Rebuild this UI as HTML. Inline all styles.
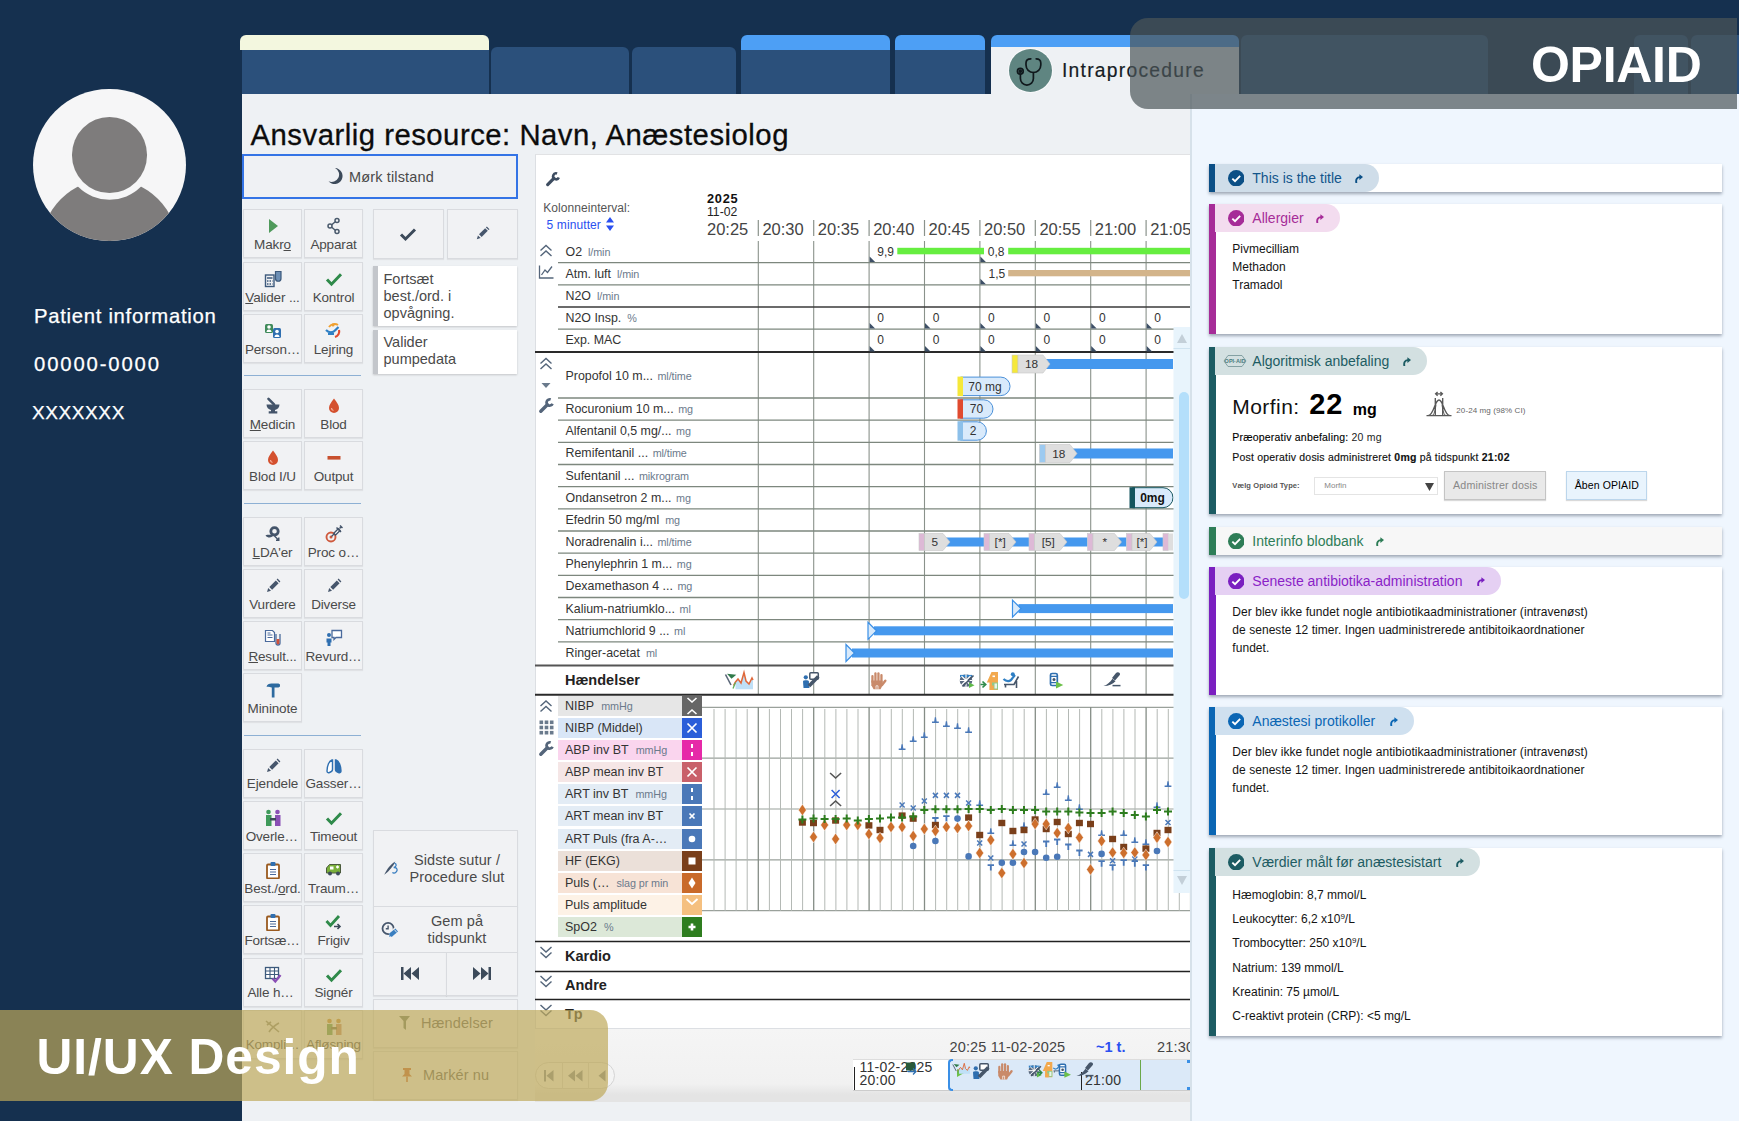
<!DOCTYPE html>
<html lang="da"><head><meta charset="utf-8"><title>OPIAID</title><style>
*{box-sizing:border-box}
html,body{margin:0;padding:0}
body{width:1739px;height:1121px;position:relative;overflow:hidden;background:#15304f;font-family:"Liberation Sans",sans-serif;color:#333}
.abs{position:absolute}
.tab{position:absolute;background:#2b507b;border-radius:6px 6px 0 0}
.tabtop{position:absolute;border-radius:6px 6px 0 0}
.sb{position:absolute;width:59px;height:49px;border:1px solid #d9dbdf;background:#f1f2f4;box-shadow:0 1px 1px rgba(0,0,0,.06);text-align:center;font-size:13.5px;color:#4a4a4a;white-space:nowrap;overflow:hidden}
.sb svg{position:absolute;left:50%;top:7px;margin-left:-9px;width:18px;height:18px}
.sb span{position:absolute;left:-6px;right:-6px;top:26.600px;line-height:16px;letter-spacing:-.15px}
.sep{position:absolute;left:244px;width:117px;height:1px;background:#8db0d4}
.wb{position:absolute;border:1px solid #d9dbdf;background:#f1f2f4;box-shadow:0 1px 1px rgba(0,0,0,.06)}
.card{position:absolute;left:1209.200px;width:513.100px;background:#fff;box-shadow:0 2px 3px rgba(60,70,90,.45)}
.bar{position:absolute;left:0;top:0;bottom:0;width:6.800px}
.in{position:absolute;left:-.9px;top:0;right:0;bottom:0}
.pill{position:absolute;left:7px;top:0;height:28px;border-radius:0 14px 14px 0;font-size:14px;line-height:28px;padding-left:37px;white-space:nowrap}
.pill svg.ck{position:absolute;left:12.500px;top:5.800px;width:16.500px;height:16.500px}
.pill svg.ar{position:absolute;right:16px;top:9.500px;width:8px;height:9px}
.ct{position:absolute;left:24px;font-size:12px;color:#141414;line-height:18.2px;white-space:nowrap}
.rl{position:absolute;left:565.500px;font-size:12.400px;color:#333;white-space:nowrap;line-height:14px}
.rl i{font-style:normal;font-size:10.800px;color:#6b7a8c;margin-left:6px;letter-spacing:-.1px}
.vl{position:absolute;left:558px;width:124px;height:20px;font-size:12.500px;line-height:20px;padding-left:7px;color:#333;white-space:nowrap}
.vl i{font-style:normal;font-size:10.800px;letter-spacing:-.1px;color:#6b7a8c;margin-left:4px}
.vs{position:absolute;left:682px;width:20px;height:20px}
</style></head><body>
<div class="abs" style="left:33.300px;top:88.800px;width:152.300px;height:152.300px;border-radius:50%;background:#f6f6f7;overflow:hidden">
<div class="abs" style="left:8.100px;top:90.700px;width:136.200px;height:136.200px;border-radius:50%;background:#7e7c7c"></div>
<div class="abs" style="left:38.300px;top:28.600px;width:75.800px;height:75.800px;border-radius:50%;background:#7e7c7c;box-shadow:0 0 0 6.800px #f6f6f7"></div>
</div>
<div class="abs" style="left:34px;top:303.700px;font-size:20.300px;color:#fff;-webkit-text-stroke:.25px #fff;line-height:24px;letter-spacing:.7px;white-space:nowrap">Patient information</div>
<div class="abs" style="left:34px;top:351.700px;font-size:20.300px;color:#fff;-webkit-text-stroke:.25px #fff;line-height:24px;letter-spacing:1.85px;white-space:nowrap">00000-0000</div>
<div class="abs" style="left:32px;top:400.700px;font-size:19px;color:#fff;-webkit-text-stroke:.25px #fff;line-height:24px;letter-spacing:.6px;white-space:nowrap">XXXXXXX</div>
<div class="tabtop" style="left:239.6px;top:35.4px;width:249px;height:15px;background:#f3f7df"></div>
<div class="abs" style="left:241.6px;top:50.4px;width:247px;height:44px;background:#2b507b"></div>
<div class="tab" style="left:490.6px;top:47.4px;width:138px;height:47px"></div>
<div class="tab" style="left:631.6px;top:47.4px;width:104px;height:47px"></div>
<div class="tabtop" style="left:740.6px;top:35.4px;width:149px;height:20px;background:#4d9ff5"></div>
<div class="abs" style="left:740.6px;top:50.4px;width:149px;height:44px;background:#2b507b"></div>
<div class="tabtop" style="left:894.6px;top:35.4px;width:90px;height:20px;background:#4d9ff5"></div>
<div class="abs" style="left:894.6px;top:50.4px;width:90px;height:44px;background:#2b507b"></div>
<div class="tabtop" style="left:990.6px;top:35.4px;width:248px;height:20px;background:#4d9ff5"></div>
<div class="abs" style="left:990.6px;top:47.4px;width:248px;height:47px;background:#eef1f4"></div>
<div class="tab" style="left:1240.6px;top:35.4px;width:247px;height:59px"></div>
<div class="tab" style="left:1633.6px;top:35.4px;width:54px;height:59px"></div>
<div class="tab" style="left:1690.6px;top:35.4px;width:60px;height:59px"></div>
<div class="abs" style="left:241.5px;top:94.2px;width:950px;height:1027px;background:#eef1f4"></div>
<div class="abs" style="left:1190px;top:94px;width:549px;height:1027px;background:#eff6fe;border-left:2px solid #d6e1ea"></div>
<div class="abs" style="left:1008.800px;top:49.300px;width:43px;height:43px;border-radius:50%;background:#5f8581;box-shadow:0 0 0 1px rgba(255,255,255,.6)"></div>
<svg class="abs" style="left:1008.800px;top:49.300px" width="43" height="43" viewBox="0 0 43 43" fill="none" stroke="#10181c" stroke-width="1.700" stroke-linecap="round"><path d="M21.800 9.800C19 9.800 17 11 17 14V16.100A7.400 7.400 0 0 0 31.800 16.100V14C31.800 11 30 9.800 27.200 9.800"/><path d="M24.400 23.500V29.600A6.500 6.500 0 0 1 11.400 29.600V25.400"/><circle cx="11.300" cy="22.200" r="2.900"/><circle cx="11.300" cy="22.200" r="1" fill="#10181c"/></svg>
<div class="abs" style="left:1062px;top:58px;font-size:19.300px;line-height:26px;color:#151c24;letter-spacing:1.25px;white-space:nowrap;-webkit-text-stroke:.2px #151c24">Intraprocedure</div>
<div class="abs" style="left:250.500px;top:116.500px;font-size:29.300px;line-height:36px;color:#0c0c0c;white-space:nowrap;letter-spacing:.5px;-webkit-text-stroke:.3px #0c0c0c">Ansvarlig resource: Navn, Anæstesiolog</div>
<div class="sb" style="left:243px;top:209.0px"><svg viewBox="0 0 18 18"><path d="M5 2l9 7-9 7z" fill="#4f9a5b"/></svg><span style="margin-left:0.0px">Makr<u>o</u></span></div>
<div class="sb" style="left:304px;top:209.0px"><svg viewBox="0 0 18 18"><g fill="none" stroke="#4a5a6c" stroke-width="1.5"><circle cx="12" cy="3.5" r="2"/><circle cx="5" cy="9" r="2"/><circle cx="12" cy="14.5" r="2"/><path d="M10.3 4.7L6.7 7.8M6.7 10.2l3.6 3.1"/></g></svg><span style="margin-left:0.0px">Apparat</span></div>
<div class="sb" style="left:243px;top:262.0px"><svg viewBox="0 0 18 18"><g fill="none" stroke="#3d5a7c" stroke-width="1.4"><rect x="1.5" y="5" width="8.5" height="11.5"/><path d="M3 8h5.5M3 11h1.5M5.5 11h1.5M8 11h.5M3 14h1.5M5.5 14h1.5M8 14h.5"/></g><path d="M11.5 1.5h5.5v7a2.7 2.7 0 0 1-5.5 0z" fill="#6d8fb5" stroke="#3d5a7c" stroke-width="1.2"/></svg><span style="margin-left:0.0px"><u>V</u>alider ...</span></div>
<div class="sb" style="left:304px;top:262.0px"><svg viewBox="0 0 18 18"><path d="M2 9.5l4.5 4.7L16 4.2" fill="none" stroke="#2f8a4a" stroke-width="3"/></svg><span style="margin-left:0.0px">Kontrol</span></div>
<div class="sb" style="left:243px;top:314.0px"><svg viewBox="0 0 18 18"><rect x="1" y="2" width="8" height="9" rx="1.5" fill="#3f8a5a"/><rect x="9" y="6" width="8" height="10" rx="1.5" fill="#2f6fb0"/><circle cx="5" cy="5" r="1.8" fill="#fff"/><path d="M2.5 10a2.5 2.5 0 0 1 5 0z" fill="#fff"/><circle cx="13" cy="9.5" r="1.8" fill="#fff"/><path d="M10.5 15a2.5 2.5 0 0 1 5 0z" fill="#fff"/></svg><span style="margin-left:0.0px">Person…</span></div>
<div class="sb" style="left:304px;top:314.0px"><svg viewBox="0 0 18 18"><path d="M1 8c3 3 7 3 9.500 0l3-3" fill="none" stroke="#2f7fc4" stroke-width="2.2"/><path d="M4 5c2-3 6-4 9-2" fill="none" stroke="#f0a030" stroke-width="2"/><circle cx="8" cy="3" r="1.6" fill="#f0a030"/><path d="M14 8c1 3-1 6-4 7" fill="none" stroke="#e04a2f" stroke-width="2.2"/><path d="M3 12h6" stroke="#2f7fc4" stroke-width="2"/></svg><span style="margin-left:0.0px">Lejring</span></div>
<div class="sb" style="left:243px;top:389.0px"><svg viewBox="0 0 18 18"><path d="M2.500 7.500h13c0 3-2 5-4.500 5.500v1.200h2.300v2.300h-8.600v-2.300H7V13c-2.500-.5-4.500-2.500-4.500-5.500z" fill="#44546a"/><path d="M4.500 1.800l5.500 5.500" stroke="#44546a" stroke-width="2.600" stroke-linecap="round"/></svg><span style="margin-left:0.0px"><u>M</u>edicin</span></div>
<div class="sb" style="left:304px;top:389.0px"><svg viewBox="0 0 18 18"><path d="M9 1.500c3 4 5 6.500 5 9.500a5 5 0 0 1-10 0c0-3 2-5.500 5-9.500z" fill="#d4502e"/><path d="M6.500 11a2.500 2.500 0 0 0 2 2.500" stroke="#f6b09a" stroke-width="1.2" fill="none"/></svg><span style="margin-left:0.0px">Blod</span></div>
<div class="sb" style="left:243px;top:441.0px"><svg viewBox="0 0 18 18"><path d="M9 1.500c3 4 5 6.500 5 9.500a5 5 0 0 1-10 0c0-3 2-5.500 5-9.500z" fill="#d4502e"/><path d="M6.500 11a2.500 2.500 0 0 0 2 2.500" stroke="#f6b09a" stroke-width="1.2" fill="none"/></svg><span style="margin-left:0.0px">Blod I/U</span></div>
<div class="sb" style="left:304px;top:441.0px"><svg viewBox="0 0 18 18"><rect x="2.500" y="7" width="13" height="3.600" fill="#c8502e"/></svg><span style="margin-left:0.0px">Output</span></div>
<div class="sb" style="left:243px;top:517.0px"><svg viewBox="0 0 18 18"><circle cx="10.500" cy="6.300" r="3.700" fill="none" stroke="#44546a" stroke-width="2.800"/><path d="M1.500 10.500c2.500-1.500 5 0 7-1.500l1.500 1c-2 3-6 3.500-8.500.5z" fill="#44546a"/><path d="M10.500 11l4 4M14.800 12.500v2.800h-2.800" fill="none" stroke="#44546a" stroke-width="1.400"/></svg><span style="margin-left:0.0px"><u>L</u>DA'er</span></div>
<div class="sb" style="left:304px;top:517.0px"><svg viewBox="0 0 18 18"><circle cx="6" cy="12" r="4.500" fill="none" stroke="#cf5a3e" stroke-width="1.900"/><circle cx="6" cy="12" r="1.500" fill="#cf5a3e"/><path d="M6.500 11.500l3-3" stroke="#44546a" stroke-width="1.300"/><path d="M8.800 8.200l4.500-4.500 1.800 1.800-4.500 4.500z" fill="#fff" stroke="#44546a" stroke-width="1.300"/><path d="M11.500 2.500l4.500 4.500M14.500 3.500l2-2M15 .5l2.500 2.500" stroke="#44546a" stroke-width="1.500" fill="none"/></svg><span style="margin-left:0.0px">Proc o…</span></div>
<div class="sb" style="left:243px;top:569.0px"><svg viewBox="0 0 18 18"><path d="M3 15l1.200-4 2.800 2.800z" fill="#46566c"/><path d="M5.300 9.900l6.500-6.500 2.800 2.800-6.500 6.500z" fill="#46566c"/><path d="M12.600 2.600l1-1 2.800 2.800-1 1z" fill="#46566c"/></svg><span style="margin-left:0.0px">Vurdere</span></div>
<div class="sb" style="left:304px;top:569.0px"><svg viewBox="0 0 18 18"><path d="M3 15l1.200-4 2.800 2.800z" fill="#46566c"/><path d="M5.300 9.900l6.500-6.500 2.800 2.800-6.500 6.500z" fill="#46566c"/><path d="M12.600 2.600l1-1 2.800 2.800-1 1z" fill="#46566c"/></svg><span style="margin-left:0.0px">Diverse</span></div>
<div class="sb" style="left:243px;top:621.0px"><svg viewBox="0 0 18 18"><path d="M1.500 1.500h7l2 2v9h-9z" fill="#fff" stroke="#4a6a9c" stroke-width="1.200"/><path d="M3.500 6h5M3.500 8.500h5M3.500 4h3" stroke="#4a6a9c" stroke-width="1"/><path d="M12 5v9a2 2 0 0 0 4 0V5" fill="none" stroke="#4a6a9c" stroke-width="1.300"/><path d="M12.600 10h2.800v4a1.400 1.400 0 0 1-2.800 0z" fill="#d0503a"/></svg><span style="margin-left:0.0px"><u>R</u>esult...</span></div>
<div class="sb" style="left:304px;top:621.0px"><svg viewBox="0 0 18 18"><path d="M7 1.500h9.500v7H11l-2 2V8.500H7z" fill="#fff" stroke="#4a6a9c" stroke-width="1.300"/><circle cx="4" cy="6" r="2" fill="#2f6fb0"/><path d="M1.500 9.500h5v4h-1v3.500h-3V13.500h-1z" fill="#2f6fb0"/></svg><span style="margin-left:0.0px">Revurd…</span></div>
<div class="sb" style="left:243px;top:673.0px"><svg viewBox="0 0 18 18"><path d="M2.500 5.800c.5-2.300 2.500-3.300 5-3.300h7l1.500 1v2l-1.500 1h-7c-2-1-3.500-.8-5-.7z" fill="#2d6a9f"/><rect x="7.800" y="5.500" width="2.700" height="11" fill="#2d6a9f"/></svg><span style="margin-left:0.0px">Mininote</span></div>
<div class="sb" style="left:243px;top:748.5px"><svg viewBox="0 0 18 18"><path d="M3 15l1.200-4 2.800 2.800z" fill="#46566c"/><path d="M5.300 9.900l6.500-6.500 2.800 2.800-6.500 6.500z" fill="#46566c"/><path d="M12.600 2.600l1-1 2.800 2.800-1 1z" fill="#46566c"/></svg><span style="margin-left:0.0px">Ejendele</span></div>
<div class="sb" style="left:304px;top:748.5px"><svg viewBox="0 0 18 18"><path d="M7 3c-3 1-5 6-5 11 0 1.500 1 2 2.500 1.500s3-1.500 3-3V3z" fill="#fff" stroke="#2f6fb0" stroke-width="1.400"/><path d="M11 3c3 1 5 6 5 11 0 1.500-1 2-2.500 1.500s-3-1.500-3-3V3z" fill="#2f6fb0" stroke="#2f6fb0" stroke-width="1.400"/></svg><span style="margin-left:0.0px">Gasser…</span></div>
<div class="sb" style="left:243px;top:801.0px"><svg viewBox="0 0 18 18"><circle cx="4.500" cy="3" r="2.300" fill="#3f9a5a"/><rect x="2" y="6" width="5.500" height="11" fill="#3f9a5a"/><circle cx="13.500" cy="3" r="2.300" fill="#8a4fb5"/><rect x="11" y="6" width="5.500" height="11" fill="#8a4fb5"/><rect x="6" y="9" width="6" height="2.500" fill="#3c4a5a"/></svg><span style="margin-left:-1.5px">Overle…</span></div>
<div class="sb" style="left:304px;top:801.0px"><svg viewBox="0 0 18 18"><path d="M2 9.5l4.5 4.7L16 4.2" fill="none" stroke="#2f8a4a" stroke-width="3"/></svg><span style="margin-left:0.0px">Timeout</span></div>
<div class="sb" style="left:243px;top:853.0px"><svg viewBox="0 0 18 18"><rect x="3" y="3.500" width="12" height="14" rx="1" fill="#fff" stroke="#9a5a1f" stroke-width="1.800"/><rect x="6.500" y="1" width="5" height="4" rx="1" fill="#2f6fb0"/><path d="M6 8.500h6M6 11h6M6 13.500h6" stroke="#4a6a9c" stroke-width="1.100"/></svg><span style="margin-left:0.0px">Best./<u>o</u>rd.</span></div>
<div class="sb" style="left:304px;top:853.0px"><svg viewBox="0 0 18 18"><path d="M1.500 12V7l3-3.500h11V12z" fill="#7ab03a" stroke="#4a5a3c" stroke-width="1"/><rect x="5" y="5.500" width="3.500" height="3" fill="#fff"/><path d="M11 6h3M12.500 4.500v3" stroke="#fff" stroke-width="1.300"/><circle cx="5" cy="12.500" r="2" fill="#3c4a5a"/><circle cx="13" cy="12.500" r="2" fill="#3c4a5a"/></svg><span style="margin-left:0.0px">Traum…</span></div>
<div class="sb" style="left:243px;top:905.3px"><svg viewBox="0 0 18 18"><rect x="3" y="3.500" width="12" height="14" rx="1" fill="#fff" stroke="#9a5a1f" stroke-width="1.800"/><rect x="6.500" y="1" width="5" height="4" rx="1" fill="#2f6fb0"/><path d="M6 8.500h6M6 11h6M6 13.500h6" stroke="#4a6a9c" stroke-width="1.100"/></svg><span style="margin-left:-1.0px">Fortsæ…</span></div>
<div class="sb" style="left:304px;top:905.3px"><svg viewBox="0 0 18 18"><path d="M1.500 8l4 4.500L14 3" fill="none" stroke="#2f8a4a" stroke-width="2.800"/><path d="M9 13.500h6m-2.500-2.500l2.500 2.500-2.500 2.500" fill="none" stroke="#3c4a5a" stroke-width="1.600"/></svg><span style="margin-left:0.0px">Frigiv</span></div>
<div class="sb" style="left:243px;top:957.6px"><svg viewBox="0 0 18 18"><rect x="1.500" y="1.500" width="13" height="11" fill="#fff" stroke="#3d5a7c" stroke-width="1.300"/><path d="M1.500 5h13M1.500 8.500h13M6 1.500v11M10.500 1.500v11" stroke="#3d5a7c" stroke-width="1.100"/><path d="M8.500 12.500l2.800 3L16.500 9" fill="none" stroke="#8a4fb5" stroke-width="2.400"/></svg><span style="margin-left:-4.0px">Alle h…</span></div>
<div class="sb" style="left:304px;top:957.6px"><svg viewBox="0 0 18 18"><path d="M2 9.5l4.5 4.7L16 4.2" fill="none" stroke="#2f8a4a" stroke-width="3"/></svg><span style="margin-left:0.0px">Signér</span></div>
<div class="sb" style="left:243px;top:1009.6px"><svg viewBox="0 0 18 18"><path d="M2 3l13 11M5 14c2-3 6-7 10-9M3 7l4-3" fill="none" stroke="#8a8a7a" stroke-width="1.600"/></svg><span style="margin-left:0.0px">Kompli…</span></div>
<div class="sb" style="left:304px;top:1009.6px"><svg viewBox="0 0 18 18"><circle cx="4.500" cy="3" r="2.300" fill="#c48a3a"/><rect x="2" y="6" width="5.500" height="11" fill="#5f9a5a"/><circle cx="13.500" cy="3" r="2.300" fill="#c48a3a"/><rect x="11" y="6" width="5.500" height="11" fill="#c48a6a"/><rect x="6" y="9" width="6" height="2.500" fill="#6a6a4a"/></svg><span style="margin-left:0.0px">Afløsning</span></div>
<div class="sep" style="top:375px"></div>
<div class="sep" style="top:503px"></div>
<div class="sep" style="top:735px"></div>
<div class="abs" style="left:242px;top:154px;width:276px;height:45px;border:2px solid #3474e6;background:#eff1f4"></div>
<svg class="abs" style="left:327px;top:167px" width="18" height="18" viewBox="0 0 18 18"><path d="M8 1a8 8 0 1 1-6.500 13.200A6.800 6.800 0 0 0 8 1z" fill="#3c4a5a"/></svg>
<div class="abs" style="left:349px;top:168px;font-size:14.500px;line-height:18px;color:#4a4a4a;white-space:nowrap;letter-spacing:.15px">Mørk tilstand</div>
<div class="wb" style="left:373px;top:209px;width:71px;height:50px"></div>
<svg class="abs" style="left:399px;top:225px" width="18" height="18" viewBox="0 0 18 18"><path d="M2 9.500l4.500 4.500L16 4.500" fill="none" stroke="#3c4a5a" stroke-width="3"/></svg>
<div class="wb" style="left:447px;top:209px;width:71px;height:50px"></div>
<svg class="abs" style="left:474px;top:225px" width="17" height="17" viewBox="0 0 18 18"><path d="M3 15l1.200-4 2.800 2.800z" fill="#46566c"/><path d="M5.300 9.900l6.500-6.500 2.800 2.800-6.500 6.500z" fill="#46566c"/><path d="M12.600 2.600l1-1 2.800 2.800-1 1z" fill="#46566c"/></svg>
<div class="abs" style="left:373px;top:266px;width:144px;height:60px;background:#fff;border-left:5px solid #c3c6cb;box-shadow:0 1px 2px rgba(0,0,0,.18)"></div>
<div class="abs" style="left:383.500px;top:271px;font-size:14.500px;line-height:17px;color:#4a4a4a">Fortsæt<br>best./ord. i<br>opvågning.</div>
<div class="abs" style="left:373px;top:330px;width:144px;height:44px;background:#fff;border-left:5px solid #c3c6cb;box-shadow:0 1px 2px rgba(0,0,0,.18)"></div>
<div class="abs" style="left:383.500px;top:334px;font-size:14.500px;line-height:17px;color:#4a4a4a">Valider<br>pumpedata</div>
<div class="wb" style="left:373px;top:830px;width:145px;height:77px"></div>
<svg class="abs" style="left:382px;top:858px" width="18" height="20" viewBox="0 0 18 20"><path d="M2.300 16.800C5 11 9 6 13.300 3.600 11.500 8 7.500 13 2.300 16.800z" fill="#46566c"/><path d="M12.300 5.200c2.600.6 2.600 3.600-.6 4.300 3.600-.3 4.600 3 2 5-1.200.9-2.600.7-3.200-.2" fill="none" stroke="#3a7fc0" stroke-width="1.300"/></svg>
<div class="abs" style="left:400px;top:851.800px;width:114px;text-align:center;font-size:14.500px;line-height:17px;color:#4a4a4a;letter-spacing:.1px">Sidste sutur /<br>Procedure slut</div>
<div class="wb" style="left:373px;top:906px;width:145px;height:47px"></div>
<svg class="abs" style="left:381px;top:920px" width="18" height="18" viewBox="0 0 18 18"><circle cx="7.100" cy="8.500" r="5.600" fill="none" stroke="#46566c" stroke-width="1.800"/><path d="M7.100 5.500v3.300H4.800" fill="none" stroke="#46566c" stroke-width="1.400"/><path d="M9.300 15.300l6.400-5.300" stroke="#f1f2f4" stroke-width="6.500"/><path d="M9.300 15.300l6.400-5.300" stroke="#3a7fc0" stroke-width="4.200"/><path d="M13.300 9.500l2.500 3" stroke="#f1f2f4" stroke-width=".9"/><path d="M8 16.800l1-2.800 1.800 2.100z" fill="#3a7fc0"/></svg>
<div class="abs" style="left:400px;top:912.800px;width:114px;text-align:center;font-size:14.500px;line-height:17px;color:#4a4a4a;letter-spacing:.1px">Gem på<br>tidspunkt</div>
<div class="wb" style="left:373px;top:952px;width:74px;height:44px"></div>
<div class="wb" style="left:446px;top:952px;width:72px;height:44px"></div>
<svg class="abs" style="left:401px;top:966px" width="18" height="15" viewBox="0 0 18 15"><rect x="0" y="1" width="2.500" height="13" fill="#3c4a5a"/><path d="M10 1v13L2.500 7.500zM18 1v13l-7.500-6.500z" fill="#3c4a5a"/></svg>
<svg class="abs" style="left:473px;top:966px" width="18" height="15" viewBox="0 0 18 15"><rect x="15.500" y="1" width="2.500" height="13" fill="#3c4a5a"/><path d="M8 1v13l7.500-6.500zM0 1v13l7.500-6.500z" fill="#3c4a5a"/></svg>
<div class="wb" style="left:373px;top:999px;width:145px;height:49px"></div>
<svg class="abs" style="left:398px;top:1015px" width="16" height="16" viewBox="0 0 16 16"><path d="M1 1h11L8 6v9L5.500 13V6z" fill="#6a7a6a"/></svg>
<div class="abs" style="left:421px;top:1014px;font-size:14.500px;line-height:18px;color:#5a5a5a;letter-spacing:.1px">Hændelser</div>
<div class="wb" style="left:373px;top:1051px;width:145px;height:49px"></div>
<svg class="abs" style="left:400px;top:1067px" width="14" height="16" viewBox="0 0 14 16"><path d="M3 1h8v2H9.500v4L12 9.500H2L4.500 7V3H3z" fill="#c8602e"/><path d="M7 9.500V15" stroke="#c8602e" stroke-width="1.600"/></svg>
<div class="abs" style="left:423px;top:1066px;font-size:14.500px;line-height:18px;color:#5a5a5a;letter-spacing:.1px">Markér nu</div>
<div class="abs" style="left:535px;top:154px;width:655px;height:875px;background:#fff;border:1px solid #dcdfe3;border-top:1.500px solid #e1e2e4;border-right:none"></div>
<div class="abs" style="left:535px;top:1029px;width:655px;height:72.500px;background:linear-gradient(#f5f5f5,#f1f1f1 75%,#e4e4e4 90%)"></div>
<svg class="abs" style="left:535px;top:154px" width="655" height="877" viewBox="535 154 655 877" font-family="Liberation Sans,sans-serif"><path d="M758.3 241V694" stroke="#8a928b" stroke-width="1.100"/><path d="M758.3 220V236" stroke="#8a928b" stroke-width="1.200"/><path d="M813.7 241V694" stroke="#8a928b" stroke-width="1.100"/><path d="M813.7 220V236" stroke="#8a928b" stroke-width="1.200"/><path d="M869.1 241V694" stroke="#8a928b" stroke-width="1.100"/><path d="M869.1 220V236" stroke="#8a928b" stroke-width="1.200"/><path d="M924.5 241V694" stroke="#8a928b" stroke-width="1.100"/><path d="M924.5 220V236" stroke="#8a928b" stroke-width="1.200"/><path d="M979.9 241V694" stroke="#8a928b" stroke-width="1.100"/><path d="M979.9 220V236" stroke="#8a928b" stroke-width="1.200"/><path d="M1035.3 241V694" stroke="#8a928b" stroke-width="1.100"/><path d="M1035.3 220V236" stroke="#8a928b" stroke-width="1.200"/><path d="M1090.7 241V694" stroke="#8a928b" stroke-width="1.100"/><path d="M1090.7 220V236" stroke="#8a928b" stroke-width="1.200"/><path d="M1146.1 241V694" stroke="#8a928b" stroke-width="1.100"/><path d="M1146.1 220V236" stroke="#8a928b" stroke-width="1.200"/><path d="M558 262.7H1191" stroke="#7d877e" stroke-width="1.300"/><path d="M558 284.8H1191" stroke="#7d877e" stroke-width="1.300"/><path d="M558 329.2H1191" stroke="#7d877e" stroke-width="1.300"/><path d="M558 398.0H1191" stroke="#7d877e" stroke-width="1.300"/><path d="M558 420.2H1191" stroke="#7d877e" stroke-width="1.300"/><path d="M558 442.3H1191" stroke="#7d877e" stroke-width="1.300"/><path d="M558 464.5H1191" stroke="#7d877e" stroke-width="1.300"/><path d="M558 486.7H1191" stroke="#7d877e" stroke-width="1.300"/><path d="M558 508.9H1191" stroke="#7d877e" stroke-width="1.300"/><path d="M558 531.0H1191" stroke="#7d877e" stroke-width="1.300"/><path d="M558 553.2H1191" stroke="#7d877e" stroke-width="1.300"/><path d="M558 575.4H1191" stroke="#7d877e" stroke-width="1.300"/><path d="M558 597.5H1191" stroke="#7d877e" stroke-width="1.300"/><path d="M558 619.7H1191" stroke="#7d877e" stroke-width="1.300"/><path d="M558 641.9H1191" stroke="#7d877e" stroke-width="1.300"/><path d="M558 307H1191" stroke="#3a3a3a" stroke-width="1.400"/><path d="M535 352.0H1191" stroke="#2a2a2a" stroke-width="2.0"/><path d="M535 665.5H1191" stroke="#555" stroke-width="1.8"/><path d="M535 694.7H1191" stroke="#2a2a2a" stroke-width="2.0"/><path d="M535 941.5H1191" stroke="#222" stroke-width="1.7"/><path d="M535 971.5H1191" stroke="#222" stroke-width="1.7"/><path d="M535 999.5H1191" stroke="#222" stroke-width="1.7"/><text x="707.0" y="234.500" font-size="16.500" fill="#444">20:25</text><text x="762.4" y="234.500" font-size="16.500" fill="#444">20:30</text><text x="817.8" y="234.500" font-size="16.500" fill="#444">20:35</text><text x="873.2" y="234.500" font-size="16.500" fill="#444">20:40</text><text x="928.6" y="234.500" font-size="16.500" fill="#444">20:45</text><text x="984.0" y="234.500" font-size="16.500" fill="#444">20:50</text><text x="1039.4" y="234.500" font-size="16.500" fill="#444">20:55</text><text x="1094.8" y="234.500" font-size="16.500" fill="#444">21:00</text><text x="1150.2" y="234.500" font-size="16.500" fill="#444">21:05</text><text x="707" y="202.600" font-size="12.800" font-weight="bold" fill="#111" letter-spacing=".7">2025</text><text x="707" y="215.800" font-size="12.200" fill="#222">11-02</text><path d="M869.6 262.1v-5.500l5.500 5.500z" fill="#3d4f66"/><text x="877.3" y="255.6" font-size="12" fill="#333">9,9</text><rect x="897.300" y="247.800" width="86.700" height="6.500" fill="#66ee40"/><path d="M980.4 262.1v-5.500l5.500 5.500z" fill="#3d4f66"/><text x="987.8" y="255.6" font-size="12" fill="#333">0,8</text><rect x="1008.200" y="247.800" width="183" height="6.500" fill="#66ee40"/><path d="M980.4 284.2v-5.500l5.500 5.500z" fill="#3d4f66"/><text x="988.5" y="277.8" font-size="12" fill="#333">1,5</text><rect x="1008.200" y="270" width="183" height="6.300" fill="#d3b48a"/><path d="M869.6 328.6v-5.500l5.500 5.500z" fill="#3d4f66"/><text x="877.3" y="321.5" font-size="12" fill="#333">0</text><path d="M869.6 351.4v-5.500l5.500 5.500z" fill="#3d4f66"/><text x="877.3" y="343.7" font-size="12" fill="#333">0</text><path d="M925.0 328.6v-5.500l5.500 5.500z" fill="#3d4f66"/><text x="932.7" y="321.5" font-size="12" fill="#333">0</text><path d="M925.0 351.4v-5.500l5.500 5.500z" fill="#3d4f66"/><text x="932.7" y="343.7" font-size="12" fill="#333">0</text><path d="M980.4 328.6v-5.500l5.500 5.500z" fill="#3d4f66"/><text x="988.1" y="321.5" font-size="12" fill="#333">0</text><path d="M980.4 351.4v-5.500l5.500 5.500z" fill="#3d4f66"/><text x="988.1" y="343.7" font-size="12" fill="#333">0</text><path d="M1035.8 328.6v-5.500l5.500 5.500z" fill="#3d4f66"/><text x="1043.5" y="321.5" font-size="12" fill="#333">0</text><path d="M1035.8 351.4v-5.500l5.500 5.500z" fill="#3d4f66"/><text x="1043.5" y="343.7" font-size="12" fill="#333">0</text><path d="M1091.2 328.6v-5.500l5.500 5.500z" fill="#3d4f66"/><text x="1098.9" y="321.5" font-size="12" fill="#333">0</text><path d="M1091.2 351.4v-5.500l5.500 5.500z" fill="#3d4f66"/><text x="1098.9" y="343.7" font-size="12" fill="#333">0</text><path d="M1146.6 328.6v-5.500l5.500 5.500z" fill="#3d4f66"/><text x="1154.3" y="321.5" font-size="12" fill="#333">0</text><path d="M1146.6 351.4v-5.500l5.500 5.500z" fill="#3d4f66"/><text x="1154.3" y="343.7" font-size="12" fill="#333">0</text><rect x="1046.0" y="359.0" width="127.0" height="10.0" fill="#4598ee"/><rect x="1012.0" y="355.0" width="6.0" height="18.0" fill="#f5e83a" stroke="#c9c9c9" stroke-width=".6"/><path d="M1018.0 355.0H1043.0L1050.0 364.0L1043.0 373.0H1018.0z" fill="#dedede" stroke="#c6c6c6" stroke-width=".6"/><text x="1031.5" y="368.2" font-size="11.800" fill="#333" text-anchor="middle">18</text><path d="M960.5 377.1H1000.8A9.2 9.2 0 0 1 1000.8 395.6H960.5z" fill="#d9eafb" stroke="#4a90d9" stroke-width="1"/><rect x="957.5" y="376.6" width="5.500" height="19.5" fill="#f5e83a"/><text x="985.0" y="390.5" font-size="12" fill="#333" text-anchor="middle">70 mg</text><path d="M960.5 399.8H983.8A9.2 9.2 0 0 1 983.8 418.2H960.5z" fill="#d9eafb" stroke="#4a90d9" stroke-width="1"/><rect x="957.5" y="399.2" width="5.500" height="19.5" fill="#e04a2f"/><text x="976.5" y="413.2" font-size="12" fill="#333" text-anchor="middle">70</text><path d="M960.5 421.8H977.2A9.2 9.2 0 0 1 977.2 440.2H960.5z" fill="#d9eafb" stroke="#4a90d9" stroke-width="1"/><rect x="957.5" y="421.2" width="5.500" height="19.5" fill="#8cc0ea"/><text x="973.2" y="435.2" font-size="12" fill="#333" text-anchor="middle">2</text><rect x="1073.0" y="448.5" width="100.0" height="10.0" fill="#4598ee"/><rect x="1039.5" y="444.5" width="6.0" height="18.0" fill="#9ccaf0" stroke="#c9c9c9" stroke-width=".6"/><path d="M1045.5 444.5H1070.0L1077.0 453.5L1070.0 462.5H1045.5z" fill="#dedede" stroke="#c6c6c6" stroke-width=".6"/><text x="1058.8" y="457.7" font-size="11.800" fill="#333" text-anchor="middle">18</text><path d="M1132.5 487.7H1163.0A10.0 10.0 0 0 1 1163.0 507.7H1132.5z" fill="#d9eafb" stroke="#14555e" stroke-width="1"/><rect x="1129.5" y="487.2" width="5.500" height="21.0" fill="#14555e"/><text x="1152.5" y="501.9" font-size="12" fill="#111" text-anchor="middle" font-weight="bold">0mg</text><rect x="944.0" y="537.5" width="40.0" height="9.0" fill="#4598ee"/><rect x="1010.0" y="537.5" width="19.0" height="9.0" fill="#4598ee"/><rect x="1061.0" y="537.5" width="26.5" height="9.0" fill="#4598ee"/><rect x="1115.5" y="537.5" width="11.0" height="9.0" fill="#4598ee"/><rect x="1151.0" y="537.5" width="12.0" height="9.0" fill="#4598ee"/><rect x="919.0" y="533.5" width="5.5" height="17.0" fill="#ddb9d6" stroke="#c9c9c9" stroke-width=".6"/><path d="M924.5 533.5H943.0L950.0 542.0L943.0 550.5H924.5z" fill="#dedede" stroke="#c6c6c6" stroke-width=".6"/><text x="934.8" y="546.2" font-size="11.800" fill="#333" text-anchor="middle">5</text><rect x="984.0" y="533.5" width="5.5" height="17.0" fill="#ddb9d6" stroke="#c9c9c9" stroke-width=".6"/><path d="M989.5 533.5H1009.0L1016.0 542.0L1009.0 550.5H989.5z" fill="#dedede" stroke="#c6c6c6" stroke-width=".6"/><text x="1000.2" y="546.2" font-size="11.800" fill="#333" text-anchor="middle">[*]</text><rect x="1029.0" y="533.5" width="5.5" height="17.0" fill="#ddb9d6" stroke="#c9c9c9" stroke-width=".6"/><path d="M1034.5 533.5H1060.0L1067.0 542.0L1060.0 550.5H1034.5z" fill="#dedede" stroke="#c6c6c6" stroke-width=".6"/><text x="1048.2" y="546.2" font-size="11.800" fill="#333" text-anchor="middle">[5]</text><rect x="1087.5" y="533.5" width="5.5" height="17.0" fill="#ddb9d6" stroke="#c9c9c9" stroke-width=".6"/><path d="M1093.0 533.5H1114.5L1121.5 542.0L1114.5 550.5H1093.0z" fill="#dedede" stroke="#c6c6c6" stroke-width=".6"/><text x="1104.8" y="546.2" font-size="11.800" fill="#333" text-anchor="middle">*</text><rect x="1126.5" y="533.5" width="5.5" height="17.0" fill="#ddb9d6" stroke="#c9c9c9" stroke-width=".6"/><path d="M1132.0 533.5H1150.0L1157.0 542.0L1150.0 550.5H1132.0z" fill="#dedede" stroke="#c6c6c6" stroke-width=".6"/><text x="1142.0" y="546.2" font-size="11.800" fill="#333" text-anchor="middle">[*]</text><rect x="1163" y="533.500" width="5.500" height="17" fill="#ddb9d6" stroke="#c9c9c9" stroke-width=".6"/><rect x="1168.500" y="533.500" width="4.500" height="17" fill="#dedede"/><rect x="1018.5" y="604.1" width="154.5" height="9.0" fill="#4598ee"/><path d="M1012.5 600.1v17l8.500-8.500z" fill="#d9eafb" stroke="#3a8fe6" stroke-width="1.200"/><rect x="874.0" y="626.3" width="299.0" height="9.0" fill="#4598ee"/><path d="M868.0 622.3v17l8.500-8.500z" fill="#d9eafb" stroke="#3a8fe6" stroke-width="1.200"/><rect x="852.0" y="648.5" width="321.0" height="9.0" fill="#4598ee"/><path d="M846.0 644.5v17l8.500-8.500z" fill="#d9eafb" stroke="#3a8fe6" stroke-width="1.200"/><path d="M702 707.3H1190" stroke="#9aa19b" stroke-width="1.200"/><path d="M702 758.1H1190" stroke="#9aa19b" stroke-width="1.200"/><path d="M702 809.0H1190" stroke="#9aa19b" stroke-width="1.200"/><path d="M702 859.8H1190" stroke="#9aa19b" stroke-width="1.200"/><path d="M702 910.7H1190" stroke="#9aa19b" stroke-width="1.200"/><path d="M714.0 709V910.700" stroke="#b4b9b5" stroke-width="1"/><path d="M725.1 709V910.700" stroke="#b4b9b5" stroke-width="1"/><path d="M736.1 709V910.700" stroke="#b4b9b5" stroke-width="1"/><path d="M747.2 709V910.700" stroke="#b4b9b5" stroke-width="1"/><path d="M758.3 707V910.700" stroke="#858d86" stroke-width="1.300"/><path d="M769.4 709V910.700" stroke="#b4b9b5" stroke-width="1"/><path d="M780.5 709V910.700" stroke="#b4b9b5" stroke-width="1"/><path d="M791.5 709V910.700" stroke="#b4b9b5" stroke-width="1"/><path d="M802.6 709V910.700" stroke="#b4b9b5" stroke-width="1"/><path d="M813.7 707V910.700" stroke="#858d86" stroke-width="1.300"/><path d="M824.8 709V910.700" stroke="#b4b9b5" stroke-width="1"/><path d="M835.9 709V910.700" stroke="#b4b9b5" stroke-width="1"/><path d="M846.9 709V910.700" stroke="#b4b9b5" stroke-width="1"/><path d="M858.0 709V910.700" stroke="#b4b9b5" stroke-width="1"/><path d="M869.1 707V910.700" stroke="#858d86" stroke-width="1.300"/><path d="M880.2 709V910.700" stroke="#b4b9b5" stroke-width="1"/><path d="M891.3 709V910.700" stroke="#b4b9b5" stroke-width="1"/><path d="M902.3 709V910.700" stroke="#b4b9b5" stroke-width="1"/><path d="M913.4 709V910.700" stroke="#b4b9b5" stroke-width="1"/><path d="M924.5 707V910.700" stroke="#858d86" stroke-width="1.300"/><path d="M935.6 709V910.700" stroke="#b4b9b5" stroke-width="1"/><path d="M946.7 709V910.700" stroke="#b4b9b5" stroke-width="1"/><path d="M957.7 709V910.700" stroke="#b4b9b5" stroke-width="1"/><path d="M968.8 709V910.700" stroke="#b4b9b5" stroke-width="1"/><path d="M979.9 707V910.700" stroke="#858d86" stroke-width="1.300"/><path d="M991.0 709V910.700" stroke="#b4b9b5" stroke-width="1"/><path d="M1002.1 709V910.700" stroke="#b4b9b5" stroke-width="1"/><path d="M1013.1 709V910.700" stroke="#b4b9b5" stroke-width="1"/><path d="M1024.2 709V910.700" stroke="#b4b9b5" stroke-width="1"/><path d="M1035.3 707V910.700" stroke="#858d86" stroke-width="1.300"/><path d="M1046.4 709V910.700" stroke="#b4b9b5" stroke-width="1"/><path d="M1057.5 709V910.700" stroke="#b4b9b5" stroke-width="1"/><path d="M1068.5 709V910.700" stroke="#b4b9b5" stroke-width="1"/><path d="M1079.6 709V910.700" stroke="#b4b9b5" stroke-width="1"/><path d="M1090.7 707V910.700" stroke="#858d86" stroke-width="1.300"/><path d="M1101.8 709V910.700" stroke="#b4b9b5" stroke-width="1"/><path d="M1112.9 709V910.700" stroke="#b4b9b5" stroke-width="1"/><path d="M1123.9 709V910.700" stroke="#b4b9b5" stroke-width="1"/><path d="M1135.0 709V910.700" stroke="#b4b9b5" stroke-width="1"/><path d="M1146.1 707V910.700" stroke="#858d86" stroke-width="1.300"/><path d="M1157.2 709V910.700" stroke="#b4b9b5" stroke-width="1"/><path d="M1168.3 709V910.700" stroke="#b4b9b5" stroke-width="1"/><path d="M1179.3 709V910.700" stroke="#b4b9b5" stroke-width="1"/><path d="M1190.4 709V910.700" stroke="#b4b9b5" stroke-width="1"/><rect x="1173.500" y="327" width="17.500" height="566" fill="#e8f4fc"/><rect x="1179" y="392" width="10" height="207" rx="5" fill="#b4dffb"/><path d="M1173.500 348.500H1191M1173.500 870.500H1191" stroke="#cfe3f0" stroke-width="1"/><path d="M1177 343h10l-5-9z" fill="#c3cfd8"/><path d="M1177 876h10l-5 9z" fill="#c3cfd8"/><circle cx="913.2" cy="846.0" r="3.300" fill="#4a78b8"/><circle cx="935.4" cy="841.0" r="3.300" fill="#4a78b8"/><circle cx="957.5" cy="818.6" r="3.300" fill="#4a78b8"/><circle cx="968.6" cy="856.4" r="3.300" fill="#4a78b8"/><circle cx="1001.8" cy="862.7" r="3.300" fill="#4a78b8"/><circle cx="1012.9" cy="862.7" r="3.300" fill="#4a78b8"/><circle cx="1024.0" cy="852.0" r="3.300" fill="#4a78b8"/><circle cx="1035.1" cy="852.0" r="3.300" fill="#4a78b8"/><circle cx="1046.2" cy="857.8" r="3.300" fill="#4a78b8"/><circle cx="1057.2" cy="856.8" r="3.300" fill="#4a78b8"/><circle cx="1101.6" cy="853.9" r="3.300" fill="#4a78b8"/><circle cx="1157.0" cy="851.0" r="3.300" fill="#4a78b8"/><path d="M932.2 818.0h6.400M935.4 818.0v5.500" stroke="#4a78b8" stroke-width="1.800" fill="none"/><path d="M943.2 816.1h6.400M946.4 816.1v5.500" stroke="#4a78b8" stroke-width="1.800" fill="none"/><path d="M987.6 865.1h6.400M990.8 865.1v5.500" stroke="#4a78b8" stroke-width="1.800" fill="none"/><path d="M1043.0 841.5h6.400M1046.2 841.5v5.500" stroke="#4a78b8" stroke-width="1.800" fill="none"/><path d="M1054.0 839.5h6.400M1057.2 839.5v5.500" stroke="#4a78b8" stroke-width="1.800" fill="none"/><path d="M1065.1 844.5h6.400M1068.3 844.5v5.500" stroke="#4a78b8" stroke-width="1.800" fill="none"/><path d="M1076.2 850.5h6.400M1079.4 850.5v5.500" stroke="#4a78b8" stroke-width="1.800" fill="none"/><path d="M1098.4 861.2h6.400M1101.6 861.2v5.500" stroke="#4a78b8" stroke-width="1.800" fill="none"/><path d="M1109.4 865.1h6.400M1112.6 865.1v5.500" stroke="#4a78b8" stroke-width="1.800" fill="none"/><path d="M1120.5 860.2h6.400M1123.7 860.2v5.500" stroke="#4a78b8" stroke-width="1.800" fill="none"/><path d="M1131.6 861.2h6.400M1134.8 861.2v5.500" stroke="#4a78b8" stroke-width="1.800" fill="none"/><path d="M1142.7 865.1h6.400M1145.9 865.1v5.500" stroke="#4a78b8" stroke-width="1.800" fill="none"/><path d="M898.7 750.0h6.800v-1.600h-2.200l-.6-4.200h-1.200l-.6 4.200h-2.200z" fill="#4a78b8"/><path d="M909.8 742.0h6.800v-1.600h-2.200l-.6-4.200h-1.200l-.6 4.200h-2.200z" fill="#4a78b8"/><path d="M920.9 738.0h6.800v-1.600h-2.200l-.6-4.200h-1.200l-.6 4.200h-2.200z" fill="#4a78b8"/><path d="M932.0 723.0h6.800v-1.600h-2.200l-.6-4.200h-1.200l-.6 4.200h-2.200z" fill="#4a78b8"/><path d="M943.0 727.0h6.800v-1.600h-2.200l-.6-4.200h-1.200l-.6 4.200h-2.200z" fill="#4a78b8"/><path d="M954.1 729.0h6.800v-1.600h-2.200l-.6-4.200h-1.200l-.6 4.200h-2.200z" fill="#4a78b8"/><path d="M965.2 733.0h6.800v-1.600h-2.200l-.6-4.200h-1.200l-.6 4.200h-2.200z" fill="#4a78b8"/><path d="M976.3 806.0h6.800v-1.600h-2.200l-.6-4.200h-1.200l-.6 4.200h-2.200z" fill="#4a78b8"/><path d="M987.4 834.0h6.800v-1.600h-2.200l-.6-4.200h-1.200l-.6 4.200h-2.200z" fill="#4a78b8"/><path d="M1009.5 846.0h6.800v-1.600h-2.200l-.6-4.200h-1.200l-.6 4.200h-2.200z" fill="#4a78b8"/><path d="M1020.6 828.0h6.800v-1.600h-2.200l-.6-4.200h-1.200l-.6 4.200h-2.200z" fill="#4a78b8"/><path d="M1042.8 795.0h6.800v-1.600h-2.200l-.6-4.200h-1.200l-.6 4.200h-2.200z" fill="#4a78b8"/><path d="M1053.8 788.0h6.800v-1.600h-2.200l-.6-4.200h-1.200l-.6 4.200h-2.200z" fill="#4a78b8"/><path d="M1064.9 801.0h6.800v-1.600h-2.200l-.6-4.200h-1.200l-.6 4.200h-2.200z" fill="#4a78b8"/><path d="M1076.0 810.0h6.800v-1.600h-2.200l-.6-4.200h-1.200l-.6 4.200h-2.200z" fill="#4a78b8"/><path d="M1098.2 836.0h6.800v-1.600h-2.200l-.6-4.200h-1.200l-.6 4.200h-2.200z" fill="#4a78b8"/><path d="M1120.3 836.0h6.800v-1.600h-2.200l-.6-4.200h-1.200l-.6 4.200h-2.200z" fill="#4a78b8"/><path d="M1131.4 843.0h6.800v-1.600h-2.200l-.6-4.200h-1.200l-.6 4.200h-2.200z" fill="#4a78b8"/><path d="M1142.5 845.0h6.800v-1.600h-2.200l-.6-4.200h-1.200l-.6 4.200h-2.200z" fill="#4a78b8"/><path d="M1153.6 808.0h6.800v-1.600h-2.200l-.6-4.200h-1.200l-.6 4.200h-2.200z" fill="#4a78b8"/><path d="M1164.6 787.0h6.800v-1.600h-2.200l-.6-4.200h-1.200l-.6 4.200h-2.200z" fill="#4a78b8"/><path d="M899.6 802.5l5 5m0-5l-5 5" stroke="#4a78b8" stroke-width="1.500" fill="none"/><path d="M910.7 805.5l5 5m0-5l-5 5" stroke="#4a78b8" stroke-width="1.500" fill="none"/><path d="M921.8 798.5l5 5m0-5l-5 5" stroke="#4a78b8" stroke-width="1.500" fill="none"/><path d="M932.9 792.9l5 5m0-5l-5 5" stroke="#4a78b8" stroke-width="1.500" fill="none"/><path d="M943.9 792.9l5 5m0-5l-5 5" stroke="#4a78b8" stroke-width="1.500" fill="none"/><path d="M955.0 792.9l5 5m0-5l-5 5" stroke="#4a78b8" stroke-width="1.500" fill="none"/><path d="M966.1 800.5l5 5m0-5l-5 5" stroke="#4a78b8" stroke-width="1.500" fill="none"/><path d="M977.2 840.5l5 5m0-5l-5 5" stroke="#4a78b8" stroke-width="1.500" fill="none"/><path d="M988.3 855.5l5 5m0-5l-5 5" stroke="#4a78b8" stroke-width="1.500" fill="none"/><path d="M1021.5 841.5l5 5m0-5l-5 5" stroke="#4a78b8" stroke-width="1.500" fill="none"/><path d="M1088.0 851.9l5 5m0-5l-5 5" stroke="#4a78b8" stroke-width="1.500" fill="none"/><path d="M1110.1 858.2l5 5m0-5l-5 5" stroke="#4a78b8" stroke-width="1.500" fill="none"/><path d="M1132.3 856.5l5 5m0-5l-5 5" stroke="#4a78b8" stroke-width="1.500" fill="none"/><path d="M1165.5 820.0l5 5m0-5l-5 5" stroke="#4a78b8" stroke-width="1.500" fill="none"/><rect x="798.9" y="819.3" width="7" height="6.400" fill="#7a3f1a"/><rect x="810.0" y="819.8" width="7" height="6.400" fill="#7a3f1a"/><rect x="832.1" y="817.3" width="7" height="6.400" fill="#7a3f1a"/><rect x="865.4" y="822.2" width="7" height="6.400" fill="#7a3f1a"/><rect x="876.5" y="826.8" width="7" height="6.400" fill="#7a3f1a"/><rect x="898.6" y="812.4" width="7" height="6.400" fill="#7a3f1a"/><rect x="909.7" y="815.4" width="7" height="6.400" fill="#7a3f1a"/><rect x="931.9" y="821.8" width="7" height="6.400" fill="#7a3f1a"/><rect x="965.1" y="814.4" width="7" height="6.400" fill="#7a3f1a"/><rect x="976.2" y="831.8" width="7" height="6.400" fill="#7a3f1a"/><rect x="998.3" y="819.8" width="7" height="6.400" fill="#7a3f1a"/><rect x="1009.4" y="827.8" width="7" height="6.400" fill="#7a3f1a"/><rect x="1020.5" y="826.8" width="7" height="6.400" fill="#7a3f1a"/><rect x="1031.6" y="816.3" width="7" height="6.400" fill="#7a3f1a"/><rect x="1042.7" y="825.8" width="7" height="6.400" fill="#7a3f1a"/><rect x="1053.7" y="818.8" width="7" height="6.400" fill="#7a3f1a"/><rect x="1064.8" y="830.8" width="7" height="6.400" fill="#7a3f1a"/><rect x="1075.9" y="819.8" width="7" height="6.400" fill="#7a3f1a"/><rect x="1087.0" y="820.8" width="7" height="6.400" fill="#7a3f1a"/><rect x="1109.1" y="835.8" width="7" height="6.400" fill="#7a3f1a"/><rect x="1120.2" y="843.8" width="7" height="6.400" fill="#7a3f1a"/><rect x="1142.4" y="845.4" width="7" height="6.400" fill="#7a3f1a"/><rect x="1153.5" y="829.8" width="7" height="6.400" fill="#7a3f1a"/><rect x="1164.5" y="826.8" width="7" height="6.400" fill="#7a3f1a"/><path d="M802.4 804.2l4 5.800-4 5.800-4-5.800z" fill="#cd6f2d" stroke="#fff" stroke-width=".5"/><path d="M813.5 831.2l4 5.800-4 5.800-4-5.800z" fill="#cd6f2d" stroke="#fff" stroke-width=".5"/><path d="M824.6 819.2l4 5.800-4 5.800-4-5.800z" fill="#cd6f2d" stroke="#fff" stroke-width=".5"/><path d="M835.6 833.2l4 5.800-4 5.800-4-5.800z" fill="#cd6f2d" stroke="#fff" stroke-width=".5"/><path d="M846.7 819.2l4 5.800-4 5.800-4-5.800z" fill="#cd6f2d" stroke="#fff" stroke-width=".5"/><path d="M857.8 819.2l4 5.800-4 5.800-4-5.800z" fill="#cd6f2d" stroke="#fff" stroke-width=".5"/><path d="M868.9 828.2l4 5.800-4 5.800-4-5.800z" fill="#cd6f2d" stroke="#fff" stroke-width=".5"/><path d="M880.0 832.2l4 5.800-4 5.800-4-5.800z" fill="#cd6f2d" stroke="#fff" stroke-width=".5"/><path d="M891.0 821.2l4 5.800-4 5.800-4-5.800z" fill="#cd6f2d" stroke="#fff" stroke-width=".5"/><path d="M902.1 821.2l4 5.800-4 5.800-4-5.800z" fill="#cd6f2d" stroke="#fff" stroke-width=".5"/><path d="M913.2 830.2l4 5.800-4 5.800-4-5.800z" fill="#cd6f2d" stroke="#fff" stroke-width=".5"/><path d="M924.3 823.2l4 5.800-4 5.800-4-5.800z" fill="#cd6f2d" stroke="#fff" stroke-width=".5"/><path d="M935.4 825.2l4 5.800-4 5.800-4-5.800z" fill="#cd6f2d" stroke="#fff" stroke-width=".5"/><path d="M946.4 821.2l4 5.800-4 5.800-4-5.800z" fill="#cd6f2d" stroke="#fff" stroke-width=".5"/><path d="M957.5 822.2l4 5.800-4 5.800-4-5.800z" fill="#cd6f2d" stroke="#fff" stroke-width=".5"/><path d="M968.6 820.2l4 5.800-4 5.800-4-5.800z" fill="#cd6f2d" stroke="#fff" stroke-width=".5"/><path d="M979.7 847.2l4 5.800-4 5.800-4-5.800z" fill="#cd6f2d" stroke="#fff" stroke-width=".5"/><path d="M990.8 834.2l4 5.800-4 5.800-4-5.800z" fill="#cd6f2d" stroke="#fff" stroke-width=".5"/><path d="M1001.8 867.2l4 5.800-4 5.800-4-5.800z" fill="#cd6f2d" stroke="#fff" stroke-width=".5"/><path d="M1012.9 848.2l4 5.800-4 5.800-4-5.800z" fill="#cd6f2d" stroke="#fff" stroke-width=".5"/><path d="M1024.0 857.2l4 5.800-4 5.800-4-5.800z" fill="#cd6f2d" stroke="#fff" stroke-width=".5"/><path d="M1035.1 818.2l4 5.800-4 5.800-4-5.800z" fill="#cd6f2d" stroke="#fff" stroke-width=".5"/><path d="M1046.2 818.2l4 5.800-4 5.800-4-5.800z" fill="#cd6f2d" stroke="#fff" stroke-width=".5"/><path d="M1057.2 827.2l4 5.800-4 5.800-4-5.800z" fill="#cd6f2d" stroke="#fff" stroke-width=".5"/><path d="M1068.3 822.2l4 5.800-4 5.800-4-5.800z" fill="#cd6f2d" stroke="#fff" stroke-width=".5"/><path d="M1079.4 831.8l4 5.800-4 5.800-4-5.800z" fill="#cd6f2d" stroke="#fff" stroke-width=".5"/><path d="M1090.5 863.7l4 5.800-4 5.800-4-5.800z" fill="#cd6f2d" stroke="#fff" stroke-width=".5"/><path d="M1101.6 835.2l4 5.800-4 5.800-4-5.800z" fill="#cd6f2d" stroke="#fff" stroke-width=".5"/><path d="M1112.6 846.7l4 5.800-4 5.800-4-5.800z" fill="#cd6f2d" stroke="#fff" stroke-width=".5"/><path d="M1123.7 847.2l4 5.800-4 5.800-4-5.800z" fill="#cd6f2d" stroke="#fff" stroke-width=".5"/><path d="M1134.8 846.7l4 5.800-4 5.800-4-5.800z" fill="#cd6f2d" stroke="#fff" stroke-width=".5"/><path d="M1145.9 849.2l4 5.800-4 5.800-4-5.800z" fill="#cd6f2d" stroke="#fff" stroke-width=".5"/><path d="M1157.0 831.8l4 5.800-4 5.800-4-5.800z" fill="#cd6f2d" stroke="#fff" stroke-width=".5"/><path d="M1168.0 836.2l4 5.800-4 5.800-4-5.800z" fill="#cd6f2d" stroke="#fff" stroke-width=".5"/><path d="M798.4 819.5h8M802.4 815.5v8" stroke="#2e7d1f" stroke-width="2" fill="none"/><path d="M809.5 818.6h8M813.5 814.6v8" stroke="#2e7d1f" stroke-width="2" fill="none"/><path d="M820.6 819.0h8M824.6 815.0v8" stroke="#2e7d1f" stroke-width="2" fill="none"/><path d="M831.6 819.0h8M835.6 815.0v8" stroke="#2e7d1f" stroke-width="2" fill="none"/><path d="M842.7 818.6h8M846.7 814.6v8" stroke="#2e7d1f" stroke-width="2" fill="none"/><path d="M853.8 820.5h8M857.8 816.5v8" stroke="#2e7d1f" stroke-width="2" fill="none"/><path d="M864.9 819.0h8M868.9 815.0v8" stroke="#2e7d1f" stroke-width="2" fill="none"/><path d="M876.0 818.6h8M880.0 814.6v8" stroke="#2e7d1f" stroke-width="2" fill="none"/><path d="M887.0 817.6h8M891.0 813.6v8" stroke="#2e7d1f" stroke-width="2" fill="none"/><path d="M898.1 817.6h8M902.1 813.6v8" stroke="#2e7d1f" stroke-width="2" fill="none"/><path d="M909.2 816.6h8M913.2 812.6v8" stroke="#2e7d1f" stroke-width="2" fill="none"/><path d="M920.3 810.0h8M924.3 806.0v8" stroke="#2e7d1f" stroke-width="2" fill="none"/><path d="M931.4 809.3h8M935.4 805.3v8" stroke="#2e7d1f" stroke-width="2" fill="none"/><path d="M942.4 809.3h8M946.4 805.3v8" stroke="#2e7d1f" stroke-width="2" fill="none"/><path d="M953.5 809.3h8M957.5 805.3v8" stroke="#2e7d1f" stroke-width="2" fill="none"/><path d="M964.6 809.0h8M968.6 805.0v8" stroke="#2e7d1f" stroke-width="2" fill="none"/><path d="M975.7 809.0h8M979.7 805.0v8" stroke="#2e7d1f" stroke-width="2" fill="none"/><path d="M986.8 810.0h8M990.8 806.0v8" stroke="#2e7d1f" stroke-width="2" fill="none"/><path d="M997.8 809.0h8M1001.8 805.0v8" stroke="#2e7d1f" stroke-width="2" fill="none"/><path d="M1008.9 810.0h8M1012.9 806.0v8" stroke="#2e7d1f" stroke-width="2" fill="none"/><path d="M1020.0 810.0h8M1024.0 806.0v8" stroke="#2e7d1f" stroke-width="2" fill="none"/><path d="M1031.1 810.0h8M1035.1 806.0v8" stroke="#2e7d1f" stroke-width="2" fill="none"/><path d="M1042.2 811.5h8M1046.2 807.5v8" stroke="#2e7d1f" stroke-width="2" fill="none"/><path d="M1053.2 811.5h8M1057.2 807.5v8" stroke="#2e7d1f" stroke-width="2" fill="none"/><path d="M1064.3 811.5h8M1068.3 807.5v8" stroke="#2e7d1f" stroke-width="2" fill="none"/><path d="M1075.4 812.5h8M1079.4 808.5v8" stroke="#2e7d1f" stroke-width="2" fill="none"/><path d="M1086.5 813.0h8M1090.5 809.0v8" stroke="#2e7d1f" stroke-width="2" fill="none"/><path d="M1097.6 813.0h8M1101.6 809.0v8" stroke="#2e7d1f" stroke-width="2" fill="none"/><path d="M1108.6 811.5h8M1112.6 807.5v8" stroke="#2e7d1f" stroke-width="2" fill="none"/><path d="M1119.7 813.0h8M1123.7 809.0v8" stroke="#2e7d1f" stroke-width="2" fill="none"/><path d="M1130.8 815.0h8M1134.8 811.0v8" stroke="#2e7d1f" stroke-width="2" fill="none"/><path d="M1141.9 816.5h8M1145.9 812.5v8" stroke="#2e7d1f" stroke-width="2" fill="none"/><path d="M1153.0 810.0h8M1157.0 806.0v8" stroke="#2e7d1f" stroke-width="2" fill="none"/><path d="M1164.0 811.5h8M1168.0 807.5v8" stroke="#2e7d1f" stroke-width="2" fill="none"/><path d="M830.1 773l5.500 5 5.500-5" stroke="#555" stroke-width="1.600" fill="none"/><path d="M831.6 790l8 8m0-8l-8 8" stroke="#2b5ed9" stroke-width="1.500" fill="none"/><path d="M830.1 806l5.500-5 5.500 5" stroke="#555" stroke-width="1.600" fill="none"/><path d="M540.5 250.5l5.500-5 5.500 5M540.5 256.0l5.500-5 5.500 5" stroke="#54657a" stroke-width="1.400" fill="none"/><path d="M540.5 363.5l5.500-5 5.500 5M540.5 369.0l5.500-5 5.500 5" stroke="#54657a" stroke-width="1.400" fill="none"/><path d="M540.5 706.0l5.500-5 5.500 5M540.5 711.5l5.500-5 5.500 5" stroke="#54657a" stroke-width="1.400" fill="none"/><path d="M540.5 947.0l5.500 5 5.500-5M540.5 952.5l5.500 5 5.500-5" stroke="#54657a" stroke-width="1.400" fill="none"/><path d="M540.5 976.0l5.500 5 5.500-5M540.5 981.5l5.500 5 5.500-5" stroke="#54657a" stroke-width="1.400" fill="none"/><path d="M540.5 1005.0l5.500 5 5.500-5M540.5 1010.5l5.500 5 5.500-5" stroke="#54657a" stroke-width="1.400" fill="none"/><path d="M539.500 265.500v12.500h14M541.500 275l3.500-5 2.500 2.500 4.500-6" stroke="#54657a" stroke-width="1.300" fill="none"/><path d="M541.500 383h9l-4.500 5z" fill="#6a7a8c"/><g transform="translate(545.5 172.0) scale(0.95)" fill="none" stroke="#3d4c60"><path d="M2.300 13.200l6.500-6.500" stroke-width="3.400" stroke-linecap="round"/><path d="M12.200 1.600A3.100 3.100 0 1 0 14 5.700" stroke-width="2.700"/></g><g transform="translate(538.5 398.0) scale(1.00)" fill="none" stroke="#54657a"><path d="M2.300 13.200l6.500-6.500" stroke-width="3.400" stroke-linecap="round"/><path d="M12.200 1.600A3.100 3.100 0 1 0 14 5.700" stroke-width="2.700"/></g><g transform="translate(538.5 741.0) scale(1.00)" fill="none" stroke="#54657a"><path d="M2.300 13.200l6.500-6.500" stroke-width="3.400" stroke-linecap="round"/><path d="M12.200 1.600A3.100 3.100 0 1 0 14 5.700" stroke-width="2.700"/></g><rect x="539.5" y="720.5" width="3.600" height="3.600" fill="#6a7a8c"/><rect x="544.7" y="720.5" width="3.600" height="3.600" fill="#6a7a8c"/><rect x="549.9" y="720.5" width="3.600" height="3.600" fill="#6a7a8c"/><rect x="539.5" y="725.7" width="3.600" height="3.600" fill="#6a7a8c"/><rect x="544.7" y="725.7" width="3.600" height="3.600" fill="#6a7a8c"/><rect x="549.9" y="725.7" width="3.600" height="3.600" fill="#6a7a8c"/><rect x="539.5" y="730.9" width="3.600" height="3.600" fill="#6a7a8c"/><rect x="544.7" y="730.9" width="3.600" height="3.600" fill="#6a7a8c"/><rect x="549.9" y="730.9" width="3.600" height="3.600" fill="#6a7a8c"/><path d="M725.500 674.500L731 685" stroke="#5a6678" stroke-width="1.600"/><path d="M727 673.800l9.300 1-4.800 4z" fill="#2f7a4a"/><path d="M735.500 689.300V682l2.500-3 3 4 3-10.500 2 8.500 3 3 3-6 1 2v9.300z" fill="#bfe0f7"/><path d="M733.500 685.500l2-3.500 2.500-3 3 4 3-10.500 2 8.500 3 3 3-6 1 2" stroke="#e0683a" stroke-width="1.500" fill="none"/><path d="M733 688.500l2.500-6" stroke="#5fae5a" stroke-width="1.300"/><circle cx="805.800" cy="677.300" r="2.100" fill="#2f6fb0"/><path d="M803 681.300c0-1 5.500-1.500 5.800 0l.7 6.700h-6z" fill="#2f6fb0"/><rect x="809.800" y="672.800" width="8.500" height="6.500" rx="1" fill="#fff" stroke="#46566a" stroke-width="1.500"/><path d="M818.300 676.500l-9.300 9.500" stroke="#46566a" stroke-width="3.600"/><rect x="871.300" y="675" width="2.300" height="8" rx="1.100" fill="#c98a6a"/><rect x="874.300" y="672.300" width="2.300" height="10" rx="1.100" fill="#c98a6a"/><rect x="877.300" y="672.300" width="2.300" height="10" rx="1.100" fill="#c98a6a"/><rect x="880.300" y="674" width="2.300" height="9" rx="1.100" fill="#c98a6a"/><path d="M871.300 680.500h11.300v4.500l-2 4.300h-7l-2.300-4z" fill="#c98a6a"/><path d="M882 685l3.300-4.300" stroke="#c98a6a" stroke-width="2.500" stroke-linecap="round"/><path d="M876 689.300v-3.500h2v3.500" stroke="#fff" stroke-width=".7" fill="none"/><circle cx="966" cy="680.500" r="6.300" fill="#5a6a80"/><path d="M960 676h12" stroke="#2f7fc4" stroke-width="2.200"/><path d="M959.500 680.500h13M966 674v13M961.500 676l9 9M970.500 676l-9 9" stroke="#fff" stroke-width="1.100"/><path d="M973.500 675.500l-11 11" stroke="#46566a" stroke-width="1.600"/><path d="M969 682.500l5.500 2.800-5.500 2.800z" fill="#5fba4a"/><path d="M980.500 684.500h4m-2-3l3.200 3-3.200 3" stroke="#2f8a4a" stroke-width="1.700" fill="none"/><path d="M991.500 672h6.500v18h-8.500v-7.500h-2.700z" fill="#f2a94e"/><rect x="992.500" y="675.500" width="2.500" height="1.600" fill="#fff"/><rect x="992" y="682.500" width="6" height="7" fill="#8fc98a"/><rect x="989.800" y="685.500" width="4" height="4.500" fill="#f2a94e"/><rect x="994.500" y="683.500" width="2.500" height="5" fill="#fff" opacity=".8"/><circle cx="1012.800" cy="674.300" r="2" fill="#2f7fc4"/><path d="M1003.500 679c3 3 7 3 9-1l2.500-3" stroke="#2f7fc4" stroke-width="2.200" fill="none"/><path d="M1004 684.500h10l4.500-8M1016.500 681v7M1005.500 685v2.500" stroke="#46566a" stroke-width="1.600" fill="none"/><rect x="1050.500" y="673.500" width="6.800" height="12" rx="1.600" fill="#fff" stroke="#2f6fb0" stroke-width="1.700"/><path d="M1050.500 676.300h6.800M1050.500 682.700h6.800" stroke="#2f6fb0" stroke-width="1.300"/><circle cx="1054" cy="679.500" r="1.500" fill="#46566a"/><path d="M1056 681.500v7l7.300-3.500z" fill="#6cc04a"/><path d="M1103.500 686c3.500-.8 6.500-3.800 9-7.200l3 2.400c-3 3.200-7.500 5-12 4.800z" fill="#46566a"/><path d="M1112 678l3.800-4.800c1.700-2.200 5.200-.6 4 1.800l-4.800 5.400z" fill="#46566a"/><path d="M1112.500 685.600h8" stroke="#46566a" stroke-width="1.500"/></svg>
<div class="abs" style="left:543.300px;top:201px;font-size:12px;line-height:14px;color:#555;white-space:nowrap;letter-spacing:.05px">Kolonneinterval:</div>
<div class="abs" style="left:546.600px;top:217.500px;font-size:12px;line-height:14px;color:#2a50f0;white-space:nowrap;letter-spacing:.1px">5 minutter</div>
<svg class="abs" style="left:606px;top:217px" width="8" height="14" viewBox="0 0 8 14"><path d="M4 0l4 5.500H0zM4 14l4-5.500H0z" fill="#2a50f0"/></svg>
<div class="rl" style="top:244.5px">O2<i>l/min</i></div>
<div class="rl" style="top:266.7px">Atm. luft<i>l/min</i></div>
<div class="rl" style="top:288.8px">N2O<i>l/min</i></div>
<div class="rl" style="top:311.0px">N2O Insp.<i>%</i></div>
<div class="rl" style="top:333.2px">Exp. MAC</div>
<div class="rl" style="top:368.5px">Propofol 10 m...<i style="margin-left:4.500px">ml/time</i></div>
<div class="rl" style="top:402.0px">Rocuronium 10 m...<i style="margin-left:4.500px">mg</i></div>
<div class="rl" style="top:424.2px">Alfentanil 0,5 mg/...<i style="margin-left:4.500px">mg</i></div>
<div class="rl" style="top:446.3px">Remifentanil ...<i style="margin-left:4.500px">ml/time</i></div>
<div class="rl" style="top:468.5px">Sufentanil ...<i style="margin-left:4.500px">mikrogram</i></div>
<div class="rl" style="top:490.7px">Ondansetron 2 m...<i style="margin-left:4.500px">mg</i></div>
<div class="rl" style="top:512.9px">Efedrin 50 mg/ml<i>mg</i></div>
<div class="rl" style="top:535.0px">Noradrenalin i...<i style="margin-left:4.500px">ml/time</i></div>
<div class="rl" style="top:557.2px">Phenylephrin 1 m...<i style="margin-left:4.500px">mg</i></div>
<div class="rl" style="top:579.4px">Dexamethason 4 ...<i style="margin-left:4.500px">mg</i></div>
<div class="rl" style="top:601.5px">Kalium-natriumklo...<i style="margin-left:4.500px">ml</i></div>
<div class="rl" style="top:623.7px">Natriumchlorid 9 ...<i style="margin-left:4.500px">ml</i></div>
<div class="rl" style="top:645.9px">Ringer-acetat<i>ml</i></div>
<div class="abs" style="left:565px;top:671px;font-size:14.500px;line-height:18px;font-weight:bold;color:#222;white-space:nowrap">Hændelser</div>
<div class="abs" style="left:565px;top:947px;font-size:14.500px;line-height:18px;font-weight:bold;color:#222;white-space:nowrap">Kardio</div>
<div class="abs" style="left:565px;top:976px;font-size:14.500px;line-height:18px;font-weight:bold;color:#222;white-space:nowrap">Andre</div>
<div class="abs" style="left:565px;top:1005px;font-size:14.500px;line-height:18px;font-weight:bold;color:#222;white-space:nowrap">Tp</div>
<div class="vl" style="top:695.5px;background:#e6e6e6">NIBP<i style="margin-left:7px">mmHg</i></div><svg class="vs" style="top:695.5px;background:#666" viewBox="0 0 20 20"><path d="M5.500 2l4.500 4 4.500-4M5.500 18l4.500-4 4.500 4" stroke="#fff" stroke-width="1.600" fill="none"/></svg>
<div class="vl" style="top:717.7px;background:#d9e6f7">NIBP (Middel)</div><svg class="vs" style="top:717.7px;background:#2b5ed9" viewBox="0 0 20 20"><path d="M5.500 5.500l9 9m0-9l-9 9" stroke="#fff" stroke-width="1.700" fill="none"/></svg>
<div class="vl" style="top:739.8px;background:#fad5ee">ABP inv BT<i style="margin-left:7px">mmHg</i></div><svg class="vs" style="top:739.8px;background:#e629a8" viewBox="0 0 20 20"><path d="M10 4v4M10 12v4" stroke="#fff" stroke-width="2" fill="none"/></svg>
<div class="vl" style="top:762.0px;background:#f5e6e6">ABP mean inv BT</div><svg class="vs" style="top:762.0px;background:#c9606a" viewBox="0 0 20 20"><path d="M5.500 5.500l9 9m0-9l-9 9" stroke="#fff" stroke-width="1.700" fill="none"/></svg>
<div class="vl" style="top:784.2px;background:#e3ecf5">ART inv BT<i style="margin-left:7px">mmHg</i></div><svg class="vs" style="top:784.2px;background:#4a78b8" viewBox="0 0 20 20"><path d="M10 4v4M10 12v4" stroke="#fff" stroke-width="2" fill="none"/></svg>
<div class="vl" style="top:806.4px;background:#e3ecf5">ART mean inv BT</div><svg class="vs" style="top:806.4px;background:#4a78b8" viewBox="0 0 20 20"><path d="M7.500 7.500l5 5m0-5l-5 5" stroke="#fff" stroke-width="1.700" fill="none"/></svg>
<div class="vl" style="top:828.5px;background:#e3ecf5">ART Puls (fra A-…</div><svg class="vs" style="top:828.5px;background:#4a78b8" viewBox="0 0 20 20"><circle cx="10" cy="10" r="3.300" fill="#fff"/></svg>
<div class="vl" style="top:850.7px;background:#ebe0d9">HF (EKG)</div><svg class="vs" style="top:850.7px;background:#7a3f1a" viewBox="0 0 20 20"><rect x="6.500" y="6.500" width="7" height="7" fill="#fff"/></svg>
<div class="vl" style="top:872.9px;background:#f7e3d6">Puls (…<i style="margin-left:7px">slag pr min</i></div><svg class="vs" style="top:872.9px;background:#c96a2a" viewBox="0 0 20 20"><path d="M10 4.500l3.500 5.500-3.500 5.500-3.500-5.500z" fill="#fff"/></svg>
<div class="vl" style="top:895.0px;background:#fdf2e6">Puls amplitude</div><svg class="vs" style="top:895.0px;background:#f5c080" viewBox="0 0 20 20"><path d="M4.500 4l5.500 5 5.500-5" stroke="#fff" stroke-width="1.800" fill="none"/></svg>
<div class="vl" style="top:917.2px;background:#dce8d8">SpO2<i style="margin-left:7px">%</i></div><svg class="vs" style="top:917.2px;background:#2e7d1f" viewBox="0 0 20 20"><path d="M6.500 10h7M10 6.500v7" stroke="#fff" stroke-width="2.600" fill="none"/></svg>
<div class="abs" style="left:535px;top:1062px;width:80px;height:27px;border:1px solid #d4d4d4;border-radius:14px;background:#f4f4f4"></div>
<div class="abs" style="left:562px;top:1062px;width:1px;height:27px;background:#d9d9d9"></div><div class="abs" style="left:588px;top:1062px;width:1px;height:27px;background:#d9d9d9"></div>
<svg class="abs" style="left:543px;top:1069px" width="66" height="13" viewBox="0 0 66 13" fill="#7f8998"><rect x="1" y="1" width="2" height="11.500"/><path d="M10.500 1v11.500L3.500 6.700zM32 1v11.500l-7-5.800zM39.500 1v11.500l-7-5.800zM62.500 1v11.500l-7-5.800z"/></svg>
<div class="abs" style="left:949.500px;top:1037.500px;font-size:14.500px;line-height:18px;color:#444;white-space:nowrap;letter-spacing:.15px">20:25 11-02-2025</div>
<div class="abs" style="left:1096px;top:1037.500px;font-size:14.500px;line-height:18px;color:#2a50f0;font-weight:bold;white-space:nowrap">~1 t.</div>
<div class="abs" style="left:1157px;top:1037.500px;width:33px;overflow:hidden;font-size:14.500px;line-height:18px;color:#444;white-space:nowrap;letter-spacing:.2px">21:30</div>
<div class="abs" style="left:853px;top:1059px;width:337px;height:32px;background:#fff;border-top:1px solid #ddd;border-bottom:1px solid #ccc"></div>
<div class="abs" style="left:948px;top:1060px;width:242px;height:30px;background:#dbe9f8"></div>
<div class="abs" style="left:948px;top:1059px;width:5px;height:32px;border:2px solid #3a8fe6;border-right:none;border-radius:4px 0 0 4px"></div>
<div class="abs" style="left:854px;top:1067px;width:1px;height:23px;background:#222"></div>
<div class="abs" style="left:859.500px;top:1061px;font-size:14px;line-height:13px;color:#333;white-space:nowrap;letter-spacing:.25px">11-02-2025<br>20:00</div>
<div class="abs" style="left:1080.500px;top:1072px;width:1px;height:18px;background:#222"></div>
<div class="abs" style="left:1085px;top:1074px;font-size:14px;line-height:13px;color:#333;white-space:nowrap;letter-spacing:.25px">21:00</div>
<div class="abs" style="left:1139.500px;top:1060px;width:1px;height:30px;background:#6aa84a"></div>
<div class="abs" style="left:1187px;top:1060px;width:3px;height:3px;background:#3a8fe6"></div><div class="abs" style="left:1187px;top:1087px;width:3px;height:3px;background:#3a8fe6"></div>
<svg class="abs" style="left:853px;top:1059px" width="338" height="32" viewBox="853 1059 338 32"><rect x="906" y="1062.500" width="9" height="8" fill="#2a5a3a"/><path d="M908 1071.500h8m-3-3l3 3-3 3" stroke="#2f6fb0" stroke-width="1.300" fill="none"/><path d="M957 1069v8l7-4z" fill="#6cc04a"/><g transform="translate(952.5 1063.0) scale(0.62) translate(-725 -672)"><path d="M725.500 674.500L731 685" stroke="#5a6678" stroke-width="1.600"/><path d="M727 673.800l9.300 1-4.800 4z" fill="#2f7a4a"/><path d="M735.500 689.300V682l2.500-3 3 4 3-10.500 2 8.500 3 3 3-6 1 2v9.300z" fill="#bfe0f7"/><path d="M733.500 685.500l2-3.500 2.500-3 3 4 3-10.500 2 8.500 3 3 3-6 1 2" stroke="#e0683a" stroke-width="1.500" fill="none"/><path d="M733 688.500l2.500-6" stroke="#5fae5a" stroke-width="1.300"/></g><g transform="translate(973.0 1063.0) scale(1.00) translate(-803 -672)"><circle cx="805.800" cy="677.300" r="2.100" fill="#2f6fb0"/><path d="M803 681.300c0-1 5.500-1.500 5.800 0l.7 6.700h-6z" fill="#2f6fb0"/><rect x="809.800" y="672.800" width="8.500" height="6.500" rx="1" fill="#fff" stroke="#46566a" stroke-width="1.500"/><path d="M818.300 676.500l-9.300 9.500" stroke="#46566a" stroke-width="3.600"/></g><g transform="translate(997.0 1063.0) scale(0.95) translate(-870 -672)"><rect x="871.300" y="675" width="2.300" height="8" rx="1.100" fill="#c98a6a"/><rect x="874.300" y="672.300" width="2.300" height="10" rx="1.100" fill="#c98a6a"/><rect x="877.300" y="672.300" width="2.300" height="10" rx="1.100" fill="#c98a6a"/><rect x="880.300" y="674" width="2.300" height="9" rx="1.100" fill="#c98a6a"/><path d="M871.300 680.500h11.300v4.500l-2 4.300h-7l-2.300-4z" fill="#c98a6a"/><path d="M882 685l3.300-4.300" stroke="#c98a6a" stroke-width="2.500" stroke-linecap="round"/><path d="M876 689.300v-3.500h2v3.500" stroke="#fff" stroke-width=".7" fill="none"/></g><g transform="translate(1027.0 1063.0) scale(0.90) translate(-958 -672)"><circle cx="966" cy="680.500" r="6.300" fill="#5a6a80"/><path d="M960 676h12" stroke="#2f7fc4" stroke-width="2.200"/><path d="M959.500 680.500h13M966 674v13M961.500 676l9 9M970.500 676l-9 9" stroke="#fff" stroke-width="1.100"/><path d="M973.500 675.500l-11 11" stroke="#46566a" stroke-width="1.600"/><path d="M969 682.500l5.500 2.800-5.500 2.800z" fill="#5fba4a"/></g><g transform="translate(1037.0 1062.0) scale(0.85) translate(-980 -672)"><path d="M980.500 684.500h4m-2-3l3.200 3-3.200 3" stroke="#2f8a4a" stroke-width="1.700" fill="none"/><path d="M991.500 672h6.500v18h-8.500v-7.500h-2.700z" fill="#f2a94e"/><rect x="992.500" y="675.500" width="2.500" height="1.600" fill="#fff"/><rect x="992" y="682.500" width="6" height="7" fill="#8fc98a"/><rect x="989.800" y="685.500" width="4" height="4.500" fill="#f2a94e"/><rect x="994.500" y="683.500" width="2.500" height="5" fill="#fff" opacity=".8"/></g><g transform="translate(1053.0 1064.0) scale(0.55) translate(-1003 -672)"><circle cx="1012.800" cy="674.300" r="2" fill="#2f7fc4"/><path d="M1003.500 679c3 3 7 3 9-1l2.500-3" stroke="#2f7fc4" stroke-width="2.200" fill="none"/><path d="M1004 684.500h10l4.500-8M1016.500 681v7M1005.500 685v2.500" stroke="#46566a" stroke-width="1.600" fill="none"/></g><g transform="translate(1059.0 1063.0) scale(0.90) translate(-1050 -672)"><rect x="1050.500" y="673.500" width="6.800" height="12" rx="1.600" fill="#fff" stroke="#2f6fb0" stroke-width="1.700"/><path d="M1050.500 676.300h6.800M1050.500 682.700h6.800" stroke="#2f6fb0" stroke-width="1.300"/><circle cx="1054" cy="679.500" r="1.500" fill="#46566a"/><path d="M1056 681.500v7l7.300-3.500z" fill="#6cc04a"/></g><g transform="translate(1077.0 1062.0) scale(1.00) translate(-1104 -672)"><path d="M1103.500 686c3.500-.8 6.500-3.800 9-7.200l3 2.400c-3 3.200-7.500 5-12 4.800z" fill="#46566a"/><path d="M1112 678l3.800-4.800c1.700-2.200 5.200-.6 4 1.800l-4.800 5.400z" fill="#46566a"/><path d="M1112.500 685.600h8" stroke="#46566a" stroke-width="1.500"/></g></svg>
<div class="card" style="top:164px;height:28px;background:#fff"><div class="bar" style="background:#0b4f86"></div><div class="in"><div class="pill" style="width:164px;background:#cfdde9;color:#13558b"><svg class="ck" viewBox="0 0 16 16"><circle cx="8" cy="8" r="8" fill="#0b4f86"/><path d="M4.200 8.300l2.600 2.600 5-5.200" fill="none" stroke="#fff" stroke-width="1.800"/></svg>This is the title<svg class="ar" viewBox="0 0 8 9"><path d="M1.300 8.600C.7 5.400 2 3.300 5 3.100" stroke="#0b4f86" stroke-width="1.900" fill="none" stroke-linecap="round"/><path d="M4.400 .2L8 3.100 4.400 6z" fill="#0b4f86"/></svg></div></div></div>
<div class="card" style="top:204px;height:130px;background:#fff"><div class="bar" style="background:#a62c98"></div><div class="in"><div class="pill" style="width:125px;background:#f3dcef;color:#a62c98"><svg class="ck" viewBox="0 0 16 16"><circle cx="8" cy="8" r="8" fill="#a62c98"/><path d="M4.200 8.300l2.600 2.600 5-5.200" fill="none" stroke="#fff" stroke-width="1.800"/></svg>Allergier<svg class="ar" viewBox="0 0 8 9"><path d="M1.300 8.600C.7 5.400 2 3.300 5 3.100" stroke="#a62c98" stroke-width="1.900" fill="none" stroke-linecap="round"/><path d="M4.400 .2L8 3.100 4.400 6z" fill="#a62c98"/></svg></div><div class="ct" style="top:36px">Pivmecilliam<br>Methadon<br>Tramadol</div></div></div>
<div class="card" style="top:347px;height:167px;background:#fff"><div class="bar" style="background:#1d5c63"></div><div class="in"><div class="pill" style="width:212px;background:#d3e0e1;color:#1d5c63"><svg class="ck" style="left:8px;top:6px;width:24px;height:16px" viewBox="0 0 24 16"><path d="M1 8l4-5.500h14L23 8l-4 5.500H5z" fill="none" stroke="#7a9a9c" stroke-width=".9"/><text x="12" y="10.200" font-size="5.500" font-weight="bold" text-anchor="middle" fill="#4a7a7c" font-family="Liberation Sans,sans-serif">OPI·AID</text></svg>Algoritmisk anbefaling<svg class="ar" viewBox="0 0 8 9"><path d="M1.300 8.600C.7 5.400 2 3.300 5 3.100" stroke="#1d5c63" stroke-width="1.900" fill="none" stroke-linecap="round"/><path d="M4.400 .2L8 3.100 4.400 6z" fill="#1d5c63"/></svg></div><div class="abs" style="left:24px;top:45px;font-size:21px;line-height:30px;color:#111;white-space:nowrap;letter-spacing:.45px">Morfin:</div>
<div class="abs" style="left:101px;top:36.500px;font-size:29px;line-height:40px;font-weight:bold;color:#000;white-space:nowrap;letter-spacing:.8px">22</div>
<div class="abs" style="left:144.500px;top:51px;font-size:16px;line-height:24px;font-weight:bold;color:#000;white-space:nowrap">mg</div>
<svg class="abs" style="left:218px;top:43.500px" width="26" height="26" viewBox="0 0 26 26" fill="none" stroke="#585858" stroke-width="1.350"><path d="M.5 24.600h25M2 24.600c6 0 6.500-15.600 11-15.600s5 15.600 11 15.600M9.300 7v17.600M16.700 7v17.600M9.800 2.800h6.400M11.600 .9L9.600 2.800l2 1.900M14.400 .9l2 1.900-2 1.900"/><path d="M6.500 24.600c2.500-2 3-8 3.500-11M19.500 24.600c-2.500-2-3-8-3.500-11" stroke-width="1"/></svg>
<div class="abs" style="left:248px;top:58px;font-size:8px;line-height:12px;color:#666;white-space:nowrap;letter-spacing:.1px">20-24 mg (98% CI)</div>
<div class="abs" style="left:24px;top:83px;font-size:10.500px;line-height:14px;color:#222;white-space:nowrap;letter-spacing:.2px"><span style="color:#000;-webkit-text-stroke:.12px #000">Præoperativ anbefaling:</span> 20 mg</div>
<div class="abs" style="left:24px;top:103px;font-size:10.500px;line-height:14px;color:#111;white-space:nowrap;letter-spacing:.2px;-webkit-text-stroke:.15px #111">Post operativ dosis administreret <b>0mg</b> på tidspunkt <b>21:02</b></div>
<div class="abs" style="left:24px;top:133px;font-size:7.500px;line-height:12px;font-weight:bold;color:#555;white-space:nowrap;letter-spacing:.1px">Vælg Opioid Type:</div>
<div class="abs" style="left:106px;top:130px;width:124px;height:18px;border:1px solid #e4e4e4;background:#fff"></div>
<div class="abs" style="left:116px;top:133px;font-size:8px;line-height:12px;color:#888;white-space:nowrap">Morfin</div>
<svg class="abs" style="left:217px;top:136px" width="9" height="8" viewBox="0 0 9 8"><path d="M0 0h9L4.500 8z" fill="#444"/></svg>
<div class="abs" style="left:236px;top:124px;width:102px;height:29px;border:1px solid #c4c4c4;background:#e9e9e9;box-shadow:0 1px 1px rgba(0,0,0,.15);font-size:10.700px;line-height:27px;text-align:center;color:#888;letter-spacing:.15px">Administrer dosis</div>
<div class="abs" style="left:358px;top:124px;width:81px;height:29px;border:1px solid #bcd6ec;background:#e9f4fd;box-shadow:0 1px 1px rgba(0,0,0,.15);font-size:10.500px;line-height:27px;text-align:center;color:#000;letter-spacing:.1px">Åben OPIAID</div>
</div></div>
<div class="card" style="top:527px;height:28px;background:#f7f7f7"><div class="bar" style="background:#2e7d57"></div><div class="in"><div class="pill" style="width:185px;background:transparent;color:#2e7d57"><svg class="ck" viewBox="0 0 16 16"><circle cx="8" cy="8" r="8" fill="#2e7d57"/><path d="M4.200 8.300l2.600 2.600 5-5.200" fill="none" stroke="#fff" stroke-width="1.800"/></svg>Interinfo blodbank<svg class="ar" viewBox="0 0 8 9"><path d="M1.300 8.600C.7 5.400 2 3.300 5 3.100" stroke="#2e7d57" stroke-width="1.900" fill="none" stroke-linecap="round"/><path d="M4.400 .2L8 3.100 4.400 6z" fill="#2e7d57"/></svg></div></div></div>
<div class="card" style="top:567px;height:128px;background:#fff"><div class="bar" style="background:#7a1fc0"></div><div class="in"><div class="pill" style="width:286px;background:#e5d0f3;color:#8a1fc7"><svg class="ck" viewBox="0 0 16 16"><circle cx="8" cy="8" r="8" fill="#7a1fc0"/><path d="M4.200 8.300l2.600 2.600 5-5.200" fill="none" stroke="#fff" stroke-width="1.800"/></svg>Seneste antibiotika-administration<svg class="ar" viewBox="0 0 8 9"><path d="M1.300 8.600C.7 5.400 2 3.300 5 3.100" stroke="#7a1fc0" stroke-width="1.900" fill="none" stroke-linecap="round"/><path d="M4.400 .2L8 3.100 4.400 6z" fill="#7a1fc0"/></svg></div><div class="ct" style="top:35.500px;letter-spacing:.05px">Der blev ikke fundet nogle antibiotikaadministrationer (intravenøst)<br>de seneste 12 timer. Ingen uadministrerede antibitoikaordnationer<br>fundet.</div></div></div>
<div class="card" style="top:707px;height:128px;background:#fff"><div class="bar" style="background:#0b66b4"></div><div class="in"><div class="pill" style="width:199px;background:#cfe0ef;color:#0b66b4"><svg class="ck" viewBox="0 0 16 16"><circle cx="8" cy="8" r="8" fill="#0b66b4"/><path d="M4.200 8.300l2.600 2.600 5-5.200" fill="none" stroke="#fff" stroke-width="1.800"/></svg>Anæstesi protikoller<svg class="ar" viewBox="0 0 8 9"><path d="M1.300 8.600C.7 5.400 2 3.300 5 3.100" stroke="#0b66b4" stroke-width="1.900" fill="none" stroke-linecap="round"/><path d="M4.400 .2L8 3.100 4.400 6z" fill="#0b66b4"/></svg></div><div class="ct" style="top:35.500px;letter-spacing:.05px">Der blev ikke fundet nogle antibiotikaadministrationer (intravenøst)<br>de seneste 12 timer. Ingen uadministrerede antibitoikaordnationer<br>fundet.</div></div></div>
<div class="card" style="top:848px;height:188px;background:#fff"><div class="bar" style="background:#1d5c63"></div><div class="in"><div class="pill" style="width:265px;background:#d3e0e1;color:#1d5c63"><svg class="ck" viewBox="0 0 16 16"><circle cx="8" cy="8" r="8" fill="#1d5c63"/><path d="M4.200 8.300l2.600 2.600 5-5.200" fill="none" stroke="#fff" stroke-width="1.800"/></svg>Værdier målt før anæstesistart<svg class="ar" viewBox="0 0 8 9"><path d="M1.300 8.600C.7 5.400 2 3.300 5 3.100" stroke="#1d5c63" stroke-width="1.900" fill="none" stroke-linecap="round"/><path d="M4.400 .2L8 3.100 4.400 6z" fill="#1d5c63"/></svg></div><div class="ct" style="top:35px;line-height:24.200px">Hæmoglobin: 8,7 mmol/L<br>Leukocytter: 6,2 x10<sup style="font-size:8px;line-height:0;vertical-align:4.500px">9</sup>/L<br>Trombocytter: 250 x10<sup style="font-size:8px;line-height:0;vertical-align:4.500px">9</sup>/L<br>Natrium: 139 mmol/L<br>Kreatinin: 75 µmol/L<br>C-reaktivt protein (CRP): &lt;5 mg/L</div></div></div>
<div class="abs" style="left:1130px;top:18px;width:607px;height:90.500px;border-radius:18px 0 0 18px;background:rgba(76,85,88,.70)"></div>
<div class="abs" style="left:1531px;top:35px;font-size:50px;line-height:60px;font-weight:bold;color:#fff;white-space:nowrap;letter-spacing:-.3px">OPIAID</div>
<div class="abs" style="left:0;top:1010px;width:608px;height:91px;border-radius:0 18px 18px 0;background:rgba(190,168,90,.694)"></div>
<div class="abs" style="left:36.500px;top:1027px;font-size:49.700px;line-height:60px;font-weight:bold;color:#fff;white-space:nowrap;letter-spacing:.95px">UI/UX Design</div>
</body></html>
